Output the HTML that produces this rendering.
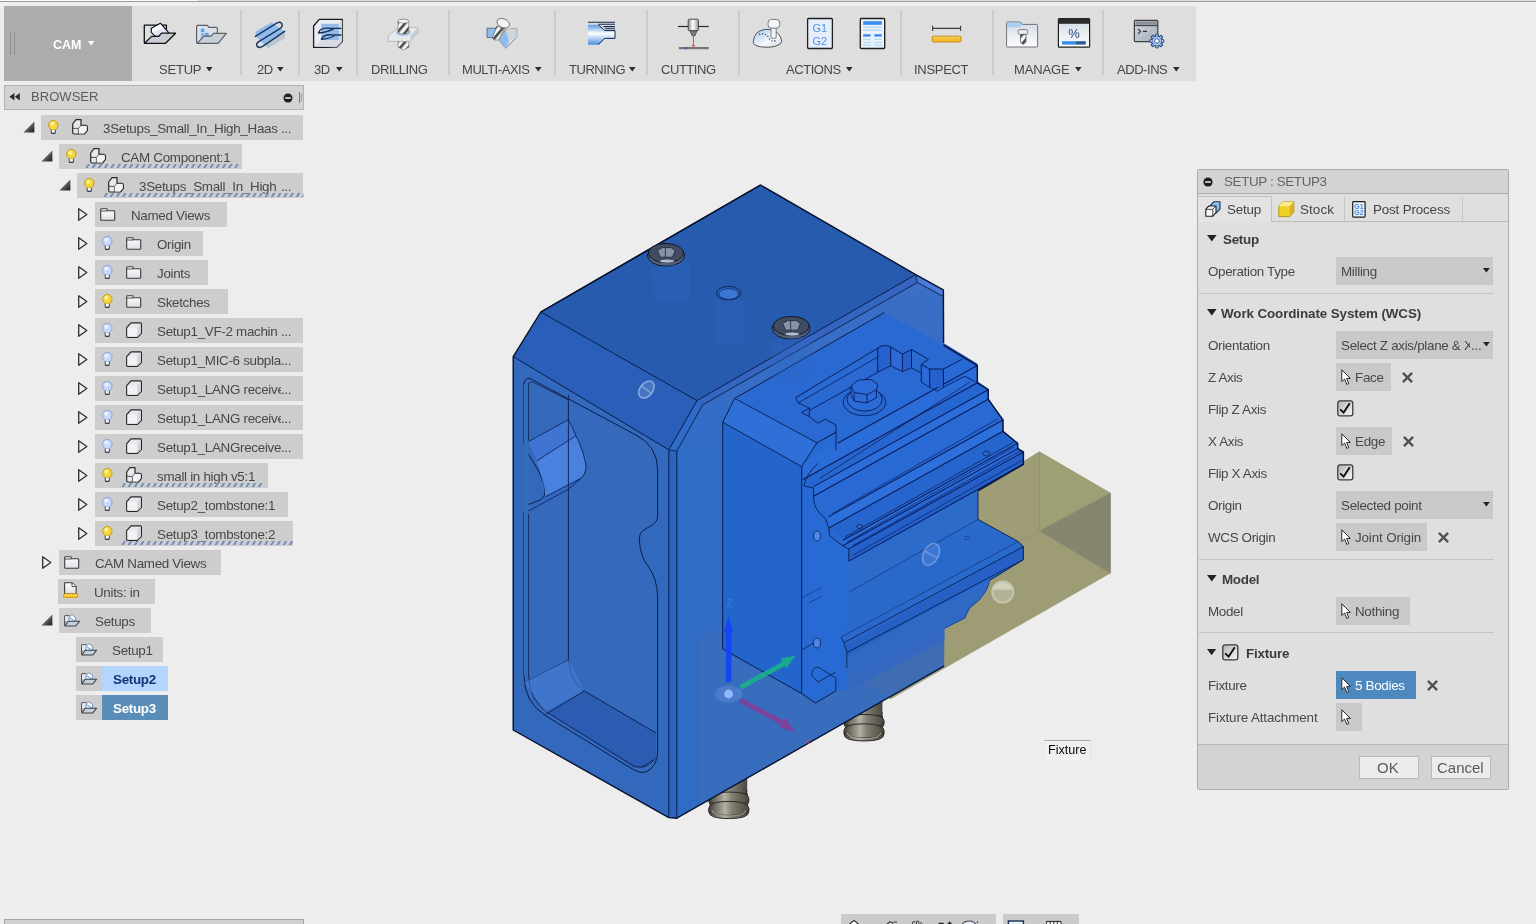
<!DOCTYPE html>
<html lang="en"><head><meta charset="utf-8"><title>Fusion 360 CAM - Setup</title>
<style>
html,body{margin:0;padding:0;}
body{width:1536px;height:924px;overflow:hidden;background:#ededed;position:relative;
 font-family:"Liberation Sans",sans-serif;font-size:13px;color:#484848;}
.a{position:absolute;}
.t{position:absolute;white-space:nowrap;line-height:16px;height:16px;will-change:transform;}
svg{position:absolute;overflow:visible;}
</style></head>
<body>
<div class="a" style="left:0px;top:0px;width:198px;height:1px;background:#fbfbfb;"></div>
<div class="a" style="left:198px;top:0px;width:1338px;height:1px;background:#e0e0e0;"></div>
<div class="a" style="left:0px;top:1px;width:1536px;height:1px;background:#9c9c9c;"></div>
<div class="a" style="left:0px;top:2px;width:1536px;height:4px;background:#efefef;"></div>
<div class="a" style="left:4px;top:6px;width:1192px;height:75px;background:#dedede;"></div>
<div class="a" style="left:4px;top:6px;width:128px;height:75px;background:#adadad;"></div>
<div class="a" style="left:10px;top:32px;width:1px;height:23px;background:#8e8e8e;"></div>
<div class="a" style="left:14px;top:32px;width:1px;height:23px;background:#8e8e8e;"></div>
<div class="t" style="left:52.5px;top:37.47px;font-size:12.5px;color:#fff;font-weight:bold;">CAM</div>
<svg style="left:87.5px;top:41.2px" width="6.4" height="4.6" viewBox="0 0 6.4 4.6"><path d="M0 0H6.4L3.2 4.6Z" fill="#fff"/></svg>
<div class="a" style="left:240px;top:10px;width:2px;height:65px;background:#cbcbcb;"></div>
<div class="a" style="left:298px;top:10px;width:2px;height:65px;background:#cbcbcb;"></div>
<div class="a" style="left:356px;top:10px;width:2px;height:65px;background:#cbcbcb;"></div>
<div class="a" style="left:448px;top:10px;width:2px;height:65px;background:#cbcbcb;"></div>
<div class="a" style="left:554px;top:10px;width:2px;height:65px;background:#cbcbcb;"></div>
<div class="a" style="left:646px;top:10px;width:2px;height:65px;background:#cbcbcb;"></div>
<div class="a" style="left:738px;top:10px;width:2px;height:65px;background:#cbcbcb;"></div>
<div class="a" style="left:900px;top:10px;width:2px;height:65px;background:#cbcbcb;"></div>
<div class="a" style="left:992px;top:10px;width:2px;height:65px;background:#cbcbcb;"></div>
<div class="a" style="left:1102px;top:10px;width:2px;height:65px;background:#cbcbcb;"></div>
<div class="t" style="left:159.2px;top:62.40px;font-size:13px;color:#464646;letter-spacing:-0.2px;">SETUP</div>
<svg style="left:205.5px;top:67.3px" width="6.6" height="4.6" viewBox="0 0 6.6 4.6"><path d="M0 0H6.6L3.3 4.6Z" fill="#2c2c2c"/></svg>
<div class="t" style="left:257.0px;top:62.40px;font-size:13px;color:#464646;letter-spacing:-0.45px;">2D</div>
<svg style="left:277.4px;top:67.3px" width="6.6" height="4.6" viewBox="0 0 6.6 4.6"><path d="M0 0H6.6L3.3 4.6Z" fill="#2c2c2c"/></svg>
<div class="t" style="left:314.4px;top:62.40px;font-size:13px;color:#464646;letter-spacing:-0.45px;">3D</div>
<svg style="left:335.5px;top:67.3px" width="6.6" height="4.6" viewBox="0 0 6.6 4.6"><path d="M0 0H6.6L3.3 4.6Z" fill="#2c2c2c"/></svg>
<div class="t" style="left:370.6px;top:62.40px;font-size:13px;color:#464646;letter-spacing:-0.45px;">DRILLING</div>
<div class="t" style="left:462.4px;top:62.40px;font-size:13px;color:#464646;letter-spacing:-0.45px;">MULTI-AXIS</div>
<svg style="left:535px;top:67.3px" width="6.6" height="4.6" viewBox="0 0 6.6 4.6"><path d="M0 0H6.6L3.3 4.6Z" fill="#2c2c2c"/></svg>
<div class="t" style="left:568.6px;top:62.40px;font-size:13px;color:#464646;letter-spacing:-0.45px;">TURNING</div>
<svg style="left:629.2px;top:67.3px" width="6.6" height="4.6" viewBox="0 0 6.6 4.6"><path d="M0 0H6.6L3.3 4.6Z" fill="#2c2c2c"/></svg>
<div class="t" style="left:660.6px;top:62.40px;font-size:13px;color:#464646;letter-spacing:-0.45px;">CUTTING</div>
<div class="t" style="left:786.0px;top:62.40px;font-size:13px;color:#464646;letter-spacing:-0.45px;">ACTIONS</div>
<svg style="left:846.3px;top:67.3px" width="6.6" height="4.6" viewBox="0 0 6.6 4.6"><path d="M0 0H6.6L3.3 4.6Z" fill="#2c2c2c"/></svg>
<div class="t" style="left:914.2px;top:62.40px;font-size:13px;color:#464646;letter-spacing:-0.3px;">INSPECT</div>
<div class="t" style="left:1013.6px;top:62.40px;font-size:13px;color:#464646;letter-spacing:-0.12px;">MANAGE</div>
<svg style="left:1074.5px;top:67.3px" width="6.6" height="4.6" viewBox="0 0 6.6 4.6"><path d="M0 0H6.6L3.3 4.6Z" fill="#2c2c2c"/></svg>
<div class="t" style="left:1117.4px;top:62.40px;font-size:13px;color:#464646;letter-spacing:-0.45px;">ADD-INS</div>
<svg style="left:1173.3px;top:67.3px" width="6.6" height="4.6" viewBox="0 0 6.6 4.6"><path d="M0 0H6.6L3.3 4.6Z" fill="#2c2c2c"/></svg>

<svg style="left:0;top:0" width="1536" height="90" viewBox="0 0 1536 90">
<defs>
 <linearGradient id="gSil" x1="0" x2="1" y1="0" y2="0"><stop offset="0" stop-color="#8e9399"/><stop offset=".45" stop-color="#fdfdfd"/><stop offset="1" stop-color="#9aa0a6"/></linearGradient>
 <linearGradient id="gTurn" x1="0" x2="0" y1="0" y2="1"><stop offset="0" stop-color="#5a9be2"/><stop offset=".45" stop-color="#ffffff"/><stop offset="1" stop-color="#4a90de"/></linearGradient>
 <linearGradient id="gPap" x1="0" x2="0" y1="0" y2="1"><stop offset="0" stop-color="#d3dae4"/><stop offset="1" stop-color="#fdfdfe"/></linearGradient>
 <linearGradient id="gDome" x1="0" x2="1" y1="0" y2="1"><stop offset="0" stop-color="#a9c6ea"/><stop offset=".6" stop-color="#f6f9fd"/><stop offset="1" stop-color="#cfd6de"/></linearGradient>
 <linearGradient id="gWin" x1="0" x2="1" y1="0" y2="1"><stop offset="0" stop-color="#d4d9e2"/><stop offset="1" stop-color="#a4acbb"/></linearGradient>
 <pattern id="pStripe" width="6" height="6" patternUnits="userSpaceOnUse" patternTransform="rotate(-50)"><rect width="6" height="6" fill="#f4f4f4"/><rect width="6" height="2.6" fill="#4a4a4a"/></pattern>
</defs>
<!-- 1 setup folder -->
<g stroke-linejoin="round">
 <path d="M144.3 43.3V25.2H166.4V33.2H161.5L158.8 36.4H151.6Z" fill="#dde1e6"/>
 <path d="M144.3 43.3V25.2H166.4V33" fill="none" stroke="#111" stroke-width="1.3"/>
 <path d="M151.3 28.2L160.4 23.2L168.8 32.8L163.6 35.8L155.4 36.4L151.3 32.3Z" fill="#fcfdff" stroke="#111" stroke-width="1.2"/>
 <path d="M152.4 32L155.6 35.4L163 35L167.4 32.6L163.6 28.4Z" fill="#d6e3f3" opacity=".85"/>
 <path d="M144.6 43.3L151.6 36.4H158.8L161.5 33.2H175.6L165.6 43.3Z" fill="#c8ced6" stroke="#111" stroke-width="1.3"/>
</g>
<!-- 2 folder with grid -->
<g stroke-linejoin="round">
 <path d="M196.6 43.2V26.6Q196.6 25.4 197.8 25.4H207.4L209 27.4H216.4Q217.4 27.4 217.4 28.4V33.4H213.4L211.2 36.2H203.8Z" fill="#dde2ea"/>
 <path d="M196.6 43.2V26.6Q196.6 25.4 197.8 25.4H207.4L209 27.4H216.4Q217.4 27.4 217.4 28.4V33.4" fill="none" stroke="#5a5f66" stroke-width="1.2"/>
 <rect x="200.8" y="28.6" width="3.6" height="3.4" fill="#5aa9ee"/><rect x="200.8" y="32.8" width="3.6" height="3.2" fill="#7ebdf3"/><rect x="205" y="32.8" width="3.6" height="3.2" fill="#5aa9ee"/><rect x="200.8" y="36.4" width="1.8" height="2.8" fill="#7ebdf3"/>
 <path d="M197.2 43.3L203.8 36.2H211.2L213.4 33.3H226.4L218 43.3Z" fill="#c9cfd7" stroke="#5a5f66" stroke-width="1.2"/>
</g>
<!-- 3 2D -->
<g>
 <path d="M255.6 31.6L271.6 22.2L285 31.4V38L268.2 48L255.6 36.4Z" fill="#92bbea"/>
 <path d="M268.2 48L285 38V31.4L266.4 42.4Z" fill="#bcc4cc"/>
 <path d="M255.4 36.4L276.6 23.2Q280.6 21 282 24Q283 26.8 279.6 28.8L258.8 41.6Q255.4 44 257.2 46.4Q259.4 48.4 262.6 46.4L284.6 31.4" fill="none" stroke="#1b3766" stroke-width="1.5" stroke-linecap="round"/>
</g>
<!-- 4 3D -->
<g>
 <path d="M313.6 26L319.2 19.4H342.4V41.4L336.6 47.4H313.6Z" fill="#e9edf2" stroke="#1c1c1c" stroke-width="1.3" stroke-linejoin="round"/>
 <path d="M336.6 47.4L342.4 41.4V19.4L338.9 23.8V40L321.3 40L315 46.6Z" fill="#cfd6de" opacity=".7"/>
 <rect x="321.3" y="23.8" width="17.6" height="16.2" fill="#93bce9"/>
 <path d="M318.4 33Q320 27.8 329 28.2L341 28.4M318.4 33Q327 32.6 334.4 28.4" fill="none" stroke="#18305c" stroke-width="1.4" stroke-linecap="round"/>
 <path d="M321.4 39.2Q323.6 34.4 331.4 34.8L341 35M321.4 39.2Q329 39 336 35" fill="none" stroke="#18305c" stroke-width="1.4" stroke-linecap="round"/>
</g>
<!-- 5 drilling -->
<g>
 <path d="M398 41V47.2L403.4 49.8L408.8 47.2V41Z" fill="url(#pStripe)" stroke="#666" stroke-width=".6"/>
 <path d="M388.3 36L398 27.6H418V33L410.3 41.3H388.3Z" fill="#e6eaee" stroke="#a9b0b8" stroke-width=".8" stroke-linejoin="round"/>
 <path d="M410.3 41.3L418 33V27.6L410.3 36Z" fill="#c6ccd3"/>
 <ellipse cx="403.4" cy="32.6" rx="7.6" ry="3.4" fill="#a9c6e6"/>
 <path d="M398 21.4Q398 19.2 403.4 19.2T408.8 21.4V32Q408.8 34 403.4 34T398 32Z" fill="url(#pStripe)" stroke="#666" stroke-width=".6"/>
 <ellipse cx="403.4" cy="21.2" rx="5.2" ry="1.9" fill="#f2f2f2" stroke="#777" stroke-width=".5"/>
</g>
<!-- 6 multi-axis -->
<g>
 <path d="M487 28.2H496V37.6H487Z" fill="#8fbcea" stroke="#33506e" stroke-width=".7"/>
 <path d="M498.7 39.8L506 29.6L516.7 28.6V37.4L505.5 48.2Z" fill="#e4e9ee" stroke="#4a5560" stroke-width=".7" stroke-linejoin="round"/>
 <path d="M506 29.6L516.7 28.6V37.4L509.2 41.6Z" fill="#cfd5dc"/>
 <path d="M498.7 39.8L506 30.6L509.2 41.6L505.5 48.2Z" fill="#8fbcea"/>
 <path d="M496.6 26.2L492.4 38Q494 41 498.6 39.8L504.8 28.6Z" fill="url(#pStripe)" stroke="#555" stroke-width=".6"/>
 <ellipse cx="503.2" cy="23.2" rx="6.6" ry="4.3" transform="rotate(24 503.2 23.2)" fill="#f4f4f4" stroke="#666" stroke-width=".8"/>
</g>
<!-- 7 turning -->
<g>
 <path d="M588 24.7H598.3L604.7 30.6H615V38.4H604.7L598.3 44.7H588Z" fill="url(#gTurn)"/>
 <path d="M588 22.2H615M598.6 24.3H615M603.4 26.6H615M605 28.7H615" stroke="#13294f" stroke-width="1.1" fill="none"/>
 <path d="M598.3 24.7L604.7 30.6H615V38.4H604.7L598.3 44.7" stroke="#13294f" stroke-width="1" fill="none"/>
</g>
<!-- 8 cutting -->
<g>
 <path d="M678 26.5H708.8" stroke="#2a2a2a" stroke-width="1.2"/>
 <rect x="688.2" y="19.2" width="10.2" height="11.6" rx="1.4" fill="url(#gSil)" stroke="#3c3c3c" stroke-width=".9"/>
 <path d="M690 30.8H697L695 35.6H692Z" fill="#7a8088" stroke="#3c3c3c" stroke-width=".8"/>
 <path d="M693.4 35.6V46.6M691.8 45L693.4 46.8L695 45" stroke="#e2492b" stroke-width="1" fill="none"/>
 <rect x="678.8" y="47" width="30" height="2.2" fill="#757575"/>
 <rect x="684.6" y="47" width="2.4" height="2.2" fill="#2f5f9e"/>
</g>
<!-- 9 simulate -->
<g>
 <path d="M753.4 41.4Q754 31 765 29.4Q777 28.6 781 38Q782.4 42 780.6 43.6Q776 47.4 766 47.2Q756 47 753.4 43.4Z" fill="url(#gDome)" stroke="#50555c" stroke-width="1"/>
 <path d="M759 34.4Q766 32.4 769 38Q770.6 42 776.6 40.6" fill="none" stroke="#1f3c78" stroke-width="1.2" stroke-dasharray="1.2 1.8"/>
 <path d="M771 27.6V37.8Q773.6 39.4 776.2 37.8V27.6Z" fill="#f3f4f6" stroke="#6a6f76" stroke-width=".9"/>
 <rect x="768" y="19.4" width="11.8" height="8.8" rx="3.6" fill="#f5f6f8" stroke="#6a6f76" stroke-width=".9"/>
</g>
<!-- 10 G1G2 -->
<g>
 <rect x="807.6" y="18.5" width="24.8" height="30" rx="1" fill="#e6eefa" stroke="#1e1e1e" stroke-width="1.3"/>
 <text x="819.8" y="31.6" text-anchor="middle" font-family="Liberation Sans, sans-serif" font-size="11" fill="#4a92ea">G1</text>
 <text x="819.8" y="44.6" text-anchor="middle" font-family="Liberation Sans, sans-serif" font-size="11" fill="#4a92ea">G2</text>
</g>
<!-- 11 sheet -->
<g>
 <rect x="860.3" y="18.5" width="24.4" height="30" rx="1" fill="#e9f1fb" stroke="#1e1e1e" stroke-width="1.3"/>
 <rect x="863.2" y="21.2" width="18.6" height="3.6" fill="#3a8ceb"/>
 <path d="M863.2 27.2H881.8M863.2 30.2H881.8" stroke="#a7cdf3" stroke-width="1"/>
 <rect x="863.2" y="34.2" width="7.4" height="2.4" fill="#3a8ceb"/><rect x="874.4" y="34.2" width="7.4" height="2.4" fill="#3a8ceb"/>
 <path d="M863.2 39.4H870.6M874.4 39.4H881.8M863.2 42.4H870.6M874.4 42.4H881.8M863.2 45.2H870.6M874.4 45.2H881.8" stroke="#a7d6f0" stroke-width="1"/>
</g>
<!-- 12 inspect -->
<g>
 <path d="M932.4 28.4H960.8M932.6 25.8V31M960.6 25.8V31" stroke="#3c3c3c" stroke-width="1.1" fill="none"/>
 <rect x="932.2" y="36.2" width="28.8" height="5.8" rx="1.2" fill="#f2bb2c" stroke="#b9860e" stroke-width=".9"/>
 <path d="M935 36.6V38.6M938 36.6V38.6M941 36.6V38.6M944 36.6V38.6M947 36.6V38.6M950 36.6V38.6M953 36.6V38.6M956 36.6V38.6M959 36.6V38.6" stroke="#fbe6a4" stroke-width="1"/>
</g>
<!-- 13 tool library -->
<g>
 <path d="M1006.6 23Q1006.6 22 1007.6 22H1020L1022.4 24.4H1036.6Q1037.6 24.4 1037.6 25.4V46Q1037.6 47 1036.6 47H1007.6Q1006.6 47 1006.6 46Z" fill="url(#gPap)" stroke="#6d737b" stroke-width="1"/>
 <path d="M1007.2 22.6H1019.8L1022 24.8L1019.8 27.2H1007.2Z" fill="#a9cff2"/>
 <rect x="1018.2" y="29.6" width="9.4" height="4.8" rx="1.6" fill="#eceef0" stroke="#666" stroke-width=".8"/>
 <path d="M1020.5 34.4H1026V42.4L1023.2 44.4L1020.5 42.4Z" fill="url(#pStripe)" stroke="#555" stroke-width=".7"/>
</g>
<!-- 14 percent -->
<g>
 <rect x="1058.4" y="18.6" width="31.2" height="28.6" rx="1" fill="url(#gPap)" stroke="#1e1e1e" stroke-width="1.2"/>
 <rect x="1058.4" y="18.6" width="31.2" height="5.2" fill="#2b2b2b"/>
 <text x="1074" y="38" text-anchor="middle" font-family="Liberation Sans, sans-serif" font-size="13" fill="#274a84">%</text>
 <rect x="1062" y="41.2" width="14" height="3.4" fill="#3a8ceb"/><rect x="1076" y="41.2" width="9.8" height="3.4" fill="#2a5b9b"/>
</g>
<!-- 15 add-ins -->
<g>
 <rect x="1134.4" y="20.3" width="23.4" height="21.3" rx="1" fill="url(#gWin)" stroke="#3e3e3e" stroke-width="1.2"/>
 <rect x="1135.4" y="21.4" width="21.4" height="3.4" fill="#8b9099"/>
 <path d="M1134.4 25.6H1157.8" stroke="#3e3e3e" stroke-width="1.1"/>
 <path d="M1138 29L1140.6 31.4L1138 33.8M1143 31.4H1147" stroke="#333" stroke-width="1.1" fill="none"/>
 <g transform="translate(1156.9 41)">
  <g fill="#a9c9f1" stroke="#1f3b79" stroke-width="1">
   <circle r="5"/>
   <rect x="-1.4" y="-6.9" width="2.8" height="2.6" rx=".6"/><rect x="-1.4" y="4.3" width="2.8" height="2.6" rx=".6"/>
   <rect x="-6.9" y="-1.4" width="2.6" height="2.8" rx=".6"/><rect x="4.3" y="-1.4" width="2.6" height="2.8" rx=".6"/>
   <g transform="rotate(45)"><rect x="-1.4" y="-6.9" width="2.8" height="2.6" rx=".6"/><rect x="-1.4" y="4.3" width="2.8" height="2.6" rx=".6"/><rect x="-6.9" y="-1.4" width="2.6" height="2.8" rx=".6"/><rect x="4.3" y="-1.4" width="2.6" height="2.8" rx=".6"/></g>
  </g>
  <circle r="4.5" fill="#a9c9f1"/><circle r="2.3" fill="#fff" stroke="#1f3b79" stroke-width=".8"/>
 </g>
</g>
</svg>

<svg style="left:0;top:0" width="0" height="0"><defs>
<linearGradient id="gTriD" x1="0" y1="0" x2="1" y2="1"><stop offset=".25" stop-color="#8c8c8c"/><stop offset=".75" stop-color="#3c3c3c"/><stop offset="1" stop-color="#1e1e1e"/></linearGradient>
<linearGradient id="gFold" x1="0" y1="0" x2="0" y2="1"><stop offset="0" stop-color="#ffffff"/><stop offset="1" stop-color="#dcdfe5"/></linearGradient>
<pattern id="pDash" width="6.2" height="4" patternUnits="userSpaceOnUse"><path d="M.4 4L2.6 4L5 0L2.8 0Z" fill="#7688a6"/></pattern>
</defs></svg>
<div class="a" style="left:4px;top:85px;width:300px;height:25px;background:#d3d3d3;box-sizing:border-box;border:1px solid #b2b2b2;"></div>
<svg style="left:9px;top:92px" width="12" height="10" viewBox="0 0 12 10"><path d="M5.4 1V8.6L.4 4.8Z M10.8 1V8.6L5.8 4.8Z" fill="#2a2a2a"/></svg>
<div class="t" style="left:31px;top:89.00px;font-size:13px;color:#5c5c5c;letter-spacing:0.05px;">BROWSER</div>
<svg style="left:282.6px;top:92.6px" width="10" height="10" viewBox="0 0 10 10"><circle cx="5" cy="5" r="4.5" fill="#1e1e1e"/><rect x="2.2" y="4.2" width="5.6" height="1.6" fill="#e8e8e8"/></svg>
<div class="a" style="left:299px;top:92px;width:1px;height:11px;background:#747474;"></div>
<div class="a" style="left:301px;top:94px;width:1px;height:7px;background:#9c9c9c;"></div>
<div class="a" style="left:41px;top:115px;width:262px;height:24.5px;background:#cdcdcd;"></div>
<svg style="left:22.6px;top:121.2px" width="12" height="12" viewBox="0 0 12 12"><path d="M11.4 .4V11.4H.4Z" fill="url(#gTriD)"/></svg>
<svg style="left:47.7px;top:119.6px" width="11" height="14" viewBox="0 0 11 14"><path d="M.5 5.2A4.8 4.8 0 1 1 10.1 5.2Q9.8 8 7.6 9.8H3Q.8 8 .5 5.2Z" fill="#f3d53c" stroke="#c39d22" stroke-width="1"/><circle cx="4.4" cy="3.8" r="2.1" fill="#fbf2a8" opacity=".85"/><path d="M3.2 9.8V13H7.4V9.8Z" fill="#f4f6fa"/><path d="M3.2 9.8V12.4Q3.2 13.2 4 13.2H6.6Q7.4 13.2 7.4 12.4V9.8" fill="none" stroke="#4e5565" stroke-width="1.1"/><path d="M3.4 13.3H7.2" stroke="#2e3340" stroke-width="1"/></svg>
<svg style="left:72px;top:118.6px" width="16" height="16" viewBox="0 0 16 16"><path d="M.7 5L4 .7H9V6.4H13.6Q15.4 6.4 15.4 8V11.4L12.4 15H2Q.7 15 .7 13.6Z" fill="#e8eaee" stroke="#262626" stroke-width="1.2" stroke-linejoin="round"/><path d="M6.4 15V9.4L9 6.4M6.4 9.4H.9" stroke="#444" stroke-width=".9" fill="none"/><path d="M6.8 14.6V9.6L9.2 6.8H14.8V11.2L12.2 14.6Z" fill="#f6f7f9" opacity=".7"/></svg>
<div class="t" style="left:103.19999999999999px;top:120.96px;font-size:13.4px;color:#484848;letter-spacing:-0.3px;width:177.6px;overflow:hidden;">3Setups_Small_In_High_Haas </div>
<div class="t" style="left:281px;top:120.96px;font-size:13.4px;color:#484848;letter-spacing:-0.35px;">...</div>
<div class="a" style="left:59px;top:144px;width:183px;height:24.5px;background:#cdcdcd;"></div>
<svg style="left:40.6px;top:150.2px" width="12" height="12" viewBox="0 0 12 12"><path d="M11.4 .4V11.4H.4Z" fill="url(#gTriD)"/></svg>
<svg style="left:65.7px;top:148.6px" width="11" height="14" viewBox="0 0 11 14"><path d="M.5 5.2A4.8 4.8 0 1 1 10.1 5.2Q9.8 8 7.6 9.8H3Q.8 8 .5 5.2Z" fill="#f3d53c" stroke="#c39d22" stroke-width="1"/><circle cx="4.4" cy="3.8" r="2.1" fill="#fbf2a8" opacity=".85"/><path d="M3.2 9.8V13H7.4V9.8Z" fill="#f4f6fa"/><path d="M3.2 9.8V12.4Q3.2 13.2 4 13.2H6.6Q7.4 13.2 7.4 12.4V9.8" fill="none" stroke="#4e5565" stroke-width="1.1"/><path d="M3.4 13.3H7.2" stroke="#2e3340" stroke-width="1"/></svg>
<svg style="left:90px;top:147.6px" width="16" height="16" viewBox="0 0 16 16"><path d="M.7 5L4 .7H9V6.4H13.6Q15.4 6.4 15.4 8V11.4L12.4 15H2Q.7 15 .7 13.6Z" fill="#e8eaee" stroke="#262626" stroke-width="1.2" stroke-linejoin="round"/><path d="M6.4 15V9.4L9 6.4M6.4 9.4H.9" stroke="#444" stroke-width=".9" fill="none"/><path d="M6.8 14.6V9.6L9.2 6.8H14.8V11.2L12.2 14.6Z" fill="#f6f7f9" opacity=".7"/></svg>
<div class="t" style="left:121.19999999999999px;top:149.96px;font-size:13.4px;color:#484848;letter-spacing:-0.3px;">CAM Component:1</div>
<svg style="left:84.5px;top:163.8px" width="154.5" height="4" viewBox="0 0 154.5 4"><rect y=".6" width="154.5" height="3.4" fill="#c6d0df" opacity=".75"/><rect width="154.5" height="4" fill="url(#pDash)"/></svg>
<div class="a" style="left:77px;top:173px;width:226px;height:24.5px;background:#cdcdcd;"></div>
<svg style="left:58.6px;top:179.2px" width="12" height="12" viewBox="0 0 12 12"><path d="M11.4 .4V11.4H.4Z" fill="url(#gTriD)"/></svg>
<svg style="left:83.7px;top:177.6px" width="11" height="14" viewBox="0 0 11 14"><path d="M.5 5.2A4.8 4.8 0 1 1 10.1 5.2Q9.8 8 7.6 9.8H3Q.8 8 .5 5.2Z" fill="#f3d53c" stroke="#c39d22" stroke-width="1"/><circle cx="4.4" cy="3.8" r="2.1" fill="#fbf2a8" opacity=".85"/><path d="M3.2 9.8V13H7.4V9.8Z" fill="#f4f6fa"/><path d="M3.2 9.8V12.4Q3.2 13.2 4 13.2H6.6Q7.4 13.2 7.4 12.4V9.8" fill="none" stroke="#4e5565" stroke-width="1.1"/><path d="M3.4 13.3H7.2" stroke="#2e3340" stroke-width="1"/></svg>
<svg style="left:108px;top:176.6px" width="16" height="16" viewBox="0 0 16 16"><path d="M.7 5L4 .7H9V6.4H13.6Q15.4 6.4 15.4 8V11.4L12.4 15H2Q.7 15 .7 13.6Z" fill="#e8eaee" stroke="#262626" stroke-width="1.2" stroke-linejoin="round"/><path d="M6.4 15V9.4L9 6.4M6.4 9.4H.9" stroke="#444" stroke-width=".9" fill="none"/><path d="M6.8 14.6V9.6L9.2 6.8H14.8V11.2L12.2 14.6Z" fill="#f6f7f9" opacity=".7"/></svg>
<div class="t" style="left:139.2px;top:178.96px;font-size:13.4px;color:#484848;letter-spacing:-0.3px;width:141.6px;overflow:hidden;">3Setups_Small_In_High </div>
<div class="t" style="left:281px;top:178.96px;font-size:13.4px;color:#484848;letter-spacing:-0.35px;">...</div>
<svg style="left:102.5px;top:192.8px" width="200.5" height="4" viewBox="0 0 200.5 4"><rect y=".6" width="200.5" height="3.4" fill="#c6d0df" opacity=".75"/><rect width="200.5" height="4" fill="url(#pDash)"/></svg>
<div class="a" style="left:95px;top:202px;width:132px;height:24.5px;background:#cdcdcd;"></div>
<svg style="left:77.6px;top:207.7px" width="10" height="13" viewBox="0 0 10 13"><path d="M.7 .7L8.8 6.5L.7 12.3Z" fill="#f0f0f0" stroke="#2e2e2e" stroke-width="1.3" stroke-linejoin="round"/></svg>
<svg style="left:100px;top:208px" width="16" height="13" viewBox="0 0 16 13"><path d="M.7 11.4V1.6Q.7 .7 1.6 .7H6.4Q7.2 .7 7.2 1.6V2.8H13.8Q14.7 2.8 14.7 3.7V11.4Q14.7 12.3 13.8 12.3H1.6Q.7 12.3 .7 11.4Z" fill="url(#gFold)" stroke="#3c3c3c" stroke-width="1.1"/><path d="M.9 3H7" stroke="#3c3c3c" stroke-width=".9"/></svg>
<div class="t" style="left:131.0px;top:207.96px;font-size:13.4px;color:#484848;letter-spacing:-0.3px;">Named Views</div>
<div class="a" style="left:95px;top:231px;width:108px;height:24.5px;background:#cdcdcd;"></div>
<svg style="left:77.6px;top:236.7px" width="10" height="13" viewBox="0 0 10 13"><path d="M.7 .7L8.8 6.5L.7 12.3Z" fill="#f0f0f0" stroke="#2e2e2e" stroke-width="1.3" stroke-linejoin="round"/></svg>
<svg style="left:101.7px;top:235.6px" width="11" height="14" viewBox="0 0 11 14"><path d="M.5 5.2A4.8 4.8 0 1 1 10.1 5.2Q9.8 8 7.6 9.8H3Q.8 8 .5 5.2Z" fill="#c7d8fa" stroke="#8ba3d6" stroke-width="1"/><circle cx="4.4" cy="3.8" r="2.1" fill="#eef4fe" opacity=".85"/><path d="M3.2 9.8V13H7.4V9.8Z" fill="#f4f6fa"/><path d="M3.2 9.8V12.4Q3.2 13.2 4 13.2H6.6Q7.4 13.2 7.4 12.4V9.8" fill="none" stroke="#4e5565" stroke-width="1.1"/><path d="M3.4 13.3H7.2" stroke="#2e3340" stroke-width="1"/></svg>
<svg style="left:126px;top:237px" width="16" height="13" viewBox="0 0 16 13"><path d="M.7 11.4V1.6Q.7 .7 1.6 .7H6.4Q7.2 .7 7.2 1.6V2.8H13.8Q14.7 2.8 14.7 3.7V11.4Q14.7 12.3 13.8 12.3H1.6Q.7 12.3 .7 11.4Z" fill="url(#gFold)" stroke="#3c3c3c" stroke-width="1.1"/><path d="M.9 3H7" stroke="#3c3c3c" stroke-width=".9"/></svg>
<div class="t" style="left:157.2px;top:236.96px;font-size:13.4px;color:#484848;letter-spacing:-0.3px;">Origin</div>
<div class="a" style="left:95px;top:260px;width:113px;height:24.5px;background:#cdcdcd;"></div>
<svg style="left:77.6px;top:265.7px" width="10" height="13" viewBox="0 0 10 13"><path d="M.7 .7L8.8 6.5L.7 12.3Z" fill="#f0f0f0" stroke="#2e2e2e" stroke-width="1.3" stroke-linejoin="round"/></svg>
<svg style="left:101.7px;top:264.6px" width="11" height="14" viewBox="0 0 11 14"><path d="M.5 5.2A4.8 4.8 0 1 1 10.1 5.2Q9.8 8 7.6 9.8H3Q.8 8 .5 5.2Z" fill="#c7d8fa" stroke="#8ba3d6" stroke-width="1"/><circle cx="4.4" cy="3.8" r="2.1" fill="#eef4fe" opacity=".85"/><path d="M3.2 9.8V13H7.4V9.8Z" fill="#f4f6fa"/><path d="M3.2 9.8V12.4Q3.2 13.2 4 13.2H6.6Q7.4 13.2 7.4 12.4V9.8" fill="none" stroke="#4e5565" stroke-width="1.1"/><path d="M3.4 13.3H7.2" stroke="#2e3340" stroke-width="1"/></svg>
<svg style="left:126px;top:266px" width="16" height="13" viewBox="0 0 16 13"><path d="M.7 11.4V1.6Q.7 .7 1.6 .7H6.4Q7.2 .7 7.2 1.6V2.8H13.8Q14.7 2.8 14.7 3.7V11.4Q14.7 12.3 13.8 12.3H1.6Q.7 12.3 .7 11.4Z" fill="url(#gFold)" stroke="#3c3c3c" stroke-width="1.1"/><path d="M.9 3H7" stroke="#3c3c3c" stroke-width=".9"/></svg>
<div class="t" style="left:157.2px;top:265.96px;font-size:13.4px;color:#484848;letter-spacing:-0.3px;">Joints</div>
<div class="a" style="left:95px;top:289px;width:133px;height:24.5px;background:#cdcdcd;"></div>
<svg style="left:77.6px;top:294.7px" width="10" height="13" viewBox="0 0 10 13"><path d="M.7 .7L8.8 6.5L.7 12.3Z" fill="#f0f0f0" stroke="#2e2e2e" stroke-width="1.3" stroke-linejoin="round"/></svg>
<svg style="left:101.7px;top:293.6px" width="11" height="14" viewBox="0 0 11 14"><path d="M.5 5.2A4.8 4.8 0 1 1 10.1 5.2Q9.8 8 7.6 9.8H3Q.8 8 .5 5.2Z" fill="#f3d53c" stroke="#c39d22" stroke-width="1"/><circle cx="4.4" cy="3.8" r="2.1" fill="#fbf2a8" opacity=".85"/><path d="M3.2 9.8V13H7.4V9.8Z" fill="#f4f6fa"/><path d="M3.2 9.8V12.4Q3.2 13.2 4 13.2H6.6Q7.4 13.2 7.4 12.4V9.8" fill="none" stroke="#4e5565" stroke-width="1.1"/><path d="M3.4 13.3H7.2" stroke="#2e3340" stroke-width="1"/></svg>
<svg style="left:126px;top:295px" width="16" height="13" viewBox="0 0 16 13"><path d="M.7 11.4V1.6Q.7 .7 1.6 .7H6.4Q7.2 .7 7.2 1.6V2.8H13.8Q14.7 2.8 14.7 3.7V11.4Q14.7 12.3 13.8 12.3H1.6Q.7 12.3 .7 11.4Z" fill="url(#gFold)" stroke="#3c3c3c" stroke-width="1.1"/><path d="M.9 3H7" stroke="#3c3c3c" stroke-width=".9"/></svg>
<div class="t" style="left:157.2px;top:294.96px;font-size:13.4px;color:#484848;letter-spacing:-0.3px;">Sketches</div>
<div class="a" style="left:95px;top:318px;width:208px;height:24.5px;background:#cdcdcd;"></div>
<svg style="left:77.6px;top:323.7px" width="10" height="13" viewBox="0 0 10 13"><path d="M.7 .7L8.8 6.5L.7 12.3Z" fill="#f0f0f0" stroke="#2e2e2e" stroke-width="1.3" stroke-linejoin="round"/></svg>
<svg style="left:101.7px;top:322.6px" width="11" height="14" viewBox="0 0 11 14"><path d="M.5 5.2A4.8 4.8 0 1 1 10.1 5.2Q9.8 8 7.6 9.8H3Q.8 8 .5 5.2Z" fill="#c7d8fa" stroke="#8ba3d6" stroke-width="1"/><circle cx="4.4" cy="3.8" r="2.1" fill="#eef4fe" opacity=".85"/><path d="M3.2 9.8V13H7.4V9.8Z" fill="#f4f6fa"/><path d="M3.2 9.8V12.4Q3.2 13.2 4 13.2H6.6Q7.4 13.2 7.4 12.4V9.8" fill="none" stroke="#4e5565" stroke-width="1.1"/><path d="M3.4 13.3H7.2" stroke="#2e3340" stroke-width="1"/></svg>
<svg style="left:126px;top:321.8px" width="16" height="16" viewBox="0 0 16 16"><path d="M.7 5.6L5 .8H14.4Q15.4 .8 15.4 1.8V11.4L11.4 15.4H1.7Q.7 15.4 .7 14.4Z" fill="#e6e8ec" stroke="#262626" stroke-width="1.2" stroke-linejoin="round"/><path d="M1.4 5.8H11V14.8H1.4Z" fill="#f3f4f6" opacity=".8"/><path d="M11.2 5.6L15 1.4V11.2L11.2 15Z" fill="#cfd3d9" opacity=".8"/></svg>
<div class="t" style="left:157.2px;top:323.96px;font-size:13.4px;color:#484848;letter-spacing:-0.3px;width:123.6px;overflow:hidden;">Setup1_VF-2 machin</div>
<div class="t" style="left:281px;top:323.96px;font-size:13.4px;color:#484848;letter-spacing:-0.35px;">...</div>
<div class="a" style="left:95px;top:347px;width:208px;height:24.5px;background:#cdcdcd;"></div>
<svg style="left:77.6px;top:352.7px" width="10" height="13" viewBox="0 0 10 13"><path d="M.7 .7L8.8 6.5L.7 12.3Z" fill="#f0f0f0" stroke="#2e2e2e" stroke-width="1.3" stroke-linejoin="round"/></svg>
<svg style="left:101.7px;top:351.6px" width="11" height="14" viewBox="0 0 11 14"><path d="M.5 5.2A4.8 4.8 0 1 1 10.1 5.2Q9.8 8 7.6 9.8H3Q.8 8 .5 5.2Z" fill="#c7d8fa" stroke="#8ba3d6" stroke-width="1"/><circle cx="4.4" cy="3.8" r="2.1" fill="#eef4fe" opacity=".85"/><path d="M3.2 9.8V13H7.4V9.8Z" fill="#f4f6fa"/><path d="M3.2 9.8V12.4Q3.2 13.2 4 13.2H6.6Q7.4 13.2 7.4 12.4V9.8" fill="none" stroke="#4e5565" stroke-width="1.1"/><path d="M3.4 13.3H7.2" stroke="#2e3340" stroke-width="1"/></svg>
<svg style="left:126px;top:350.8px" width="16" height="16" viewBox="0 0 16 16"><path d="M.7 5.6L5 .8H14.4Q15.4 .8 15.4 1.8V11.4L11.4 15.4H1.7Q.7 15.4 .7 14.4Z" fill="#e6e8ec" stroke="#262626" stroke-width="1.2" stroke-linejoin="round"/><path d="M1.4 5.8H11V14.8H1.4Z" fill="#f3f4f6" opacity=".8"/><path d="M11.2 5.6L15 1.4V11.2L11.2 15Z" fill="#cfd3d9" opacity=".8"/></svg>
<div class="t" style="left:157.2px;top:352.96px;font-size:13.4px;color:#484848;letter-spacing:-0.3px;width:123.6px;overflow:hidden;">Setup1_MIC-6 subpla</div>
<div class="t" style="left:281px;top:352.96px;font-size:13.4px;color:#484848;letter-spacing:-0.35px;">...</div>
<div class="a" style="left:95px;top:376px;width:208px;height:24.5px;background:#cdcdcd;"></div>
<svg style="left:77.6px;top:381.7px" width="10" height="13" viewBox="0 0 10 13"><path d="M.7 .7L8.8 6.5L.7 12.3Z" fill="#f0f0f0" stroke="#2e2e2e" stroke-width="1.3" stroke-linejoin="round"/></svg>
<svg style="left:101.7px;top:380.6px" width="11" height="14" viewBox="0 0 11 14"><path d="M.5 5.2A4.8 4.8 0 1 1 10.1 5.2Q9.8 8 7.6 9.8H3Q.8 8 .5 5.2Z" fill="#c7d8fa" stroke="#8ba3d6" stroke-width="1"/><circle cx="4.4" cy="3.8" r="2.1" fill="#eef4fe" opacity=".85"/><path d="M3.2 9.8V13H7.4V9.8Z" fill="#f4f6fa"/><path d="M3.2 9.8V12.4Q3.2 13.2 4 13.2H6.6Q7.4 13.2 7.4 12.4V9.8" fill="none" stroke="#4e5565" stroke-width="1.1"/><path d="M3.4 13.3H7.2" stroke="#2e3340" stroke-width="1"/></svg>
<svg style="left:126px;top:379.8px" width="16" height="16" viewBox="0 0 16 16"><path d="M.7 5.6L5 .8H14.4Q15.4 .8 15.4 1.8V11.4L11.4 15.4H1.7Q.7 15.4 .7 14.4Z" fill="#e6e8ec" stroke="#262626" stroke-width="1.2" stroke-linejoin="round"/><path d="M1.4 5.8H11V14.8H1.4Z" fill="#f3f4f6" opacity=".8"/><path d="M11.2 5.6L15 1.4V11.2L11.2 15Z" fill="#cfd3d9" opacity=".8"/></svg>
<div class="t" style="left:157.2px;top:381.96px;font-size:13.4px;color:#484848;letter-spacing:-0.3px;width:123.6px;overflow:hidden;">Setup1_LANG receive</div>
<div class="t" style="left:281px;top:381.96px;font-size:13.4px;color:#484848;letter-spacing:-0.35px;">...</div>
<div class="a" style="left:95px;top:405px;width:208px;height:24.5px;background:#cdcdcd;"></div>
<svg style="left:77.6px;top:410.7px" width="10" height="13" viewBox="0 0 10 13"><path d="M.7 .7L8.8 6.5L.7 12.3Z" fill="#f0f0f0" stroke="#2e2e2e" stroke-width="1.3" stroke-linejoin="round"/></svg>
<svg style="left:101.7px;top:409.6px" width="11" height="14" viewBox="0 0 11 14"><path d="M.5 5.2A4.8 4.8 0 1 1 10.1 5.2Q9.8 8 7.6 9.8H3Q.8 8 .5 5.2Z" fill="#c7d8fa" stroke="#8ba3d6" stroke-width="1"/><circle cx="4.4" cy="3.8" r="2.1" fill="#eef4fe" opacity=".85"/><path d="M3.2 9.8V13H7.4V9.8Z" fill="#f4f6fa"/><path d="M3.2 9.8V12.4Q3.2 13.2 4 13.2H6.6Q7.4 13.2 7.4 12.4V9.8" fill="none" stroke="#4e5565" stroke-width="1.1"/><path d="M3.4 13.3H7.2" stroke="#2e3340" stroke-width="1"/></svg>
<svg style="left:126px;top:408.8px" width="16" height="16" viewBox="0 0 16 16"><path d="M.7 5.6L5 .8H14.4Q15.4 .8 15.4 1.8V11.4L11.4 15.4H1.7Q.7 15.4 .7 14.4Z" fill="#e6e8ec" stroke="#262626" stroke-width="1.2" stroke-linejoin="round"/><path d="M1.4 5.8H11V14.8H1.4Z" fill="#f3f4f6" opacity=".8"/><path d="M11.2 5.6L15 1.4V11.2L11.2 15Z" fill="#cfd3d9" opacity=".8"/></svg>
<div class="t" style="left:157.2px;top:410.96px;font-size:13.4px;color:#484848;letter-spacing:-0.3px;width:123.6px;overflow:hidden;">Setup1_LANG receive</div>
<div class="t" style="left:281px;top:410.96px;font-size:13.4px;color:#484848;letter-spacing:-0.35px;">...</div>
<div class="a" style="left:95px;top:434px;width:208px;height:24.5px;background:#cdcdcd;"></div>
<svg style="left:77.6px;top:439.7px" width="10" height="13" viewBox="0 0 10 13"><path d="M.7 .7L8.8 6.5L.7 12.3Z" fill="#f0f0f0" stroke="#2e2e2e" stroke-width="1.3" stroke-linejoin="round"/></svg>
<svg style="left:101.7px;top:438.6px" width="11" height="14" viewBox="0 0 11 14"><path d="M.5 5.2A4.8 4.8 0 1 1 10.1 5.2Q9.8 8 7.6 9.8H3Q.8 8 .5 5.2Z" fill="#c7d8fa" stroke="#8ba3d6" stroke-width="1"/><circle cx="4.4" cy="3.8" r="2.1" fill="#eef4fe" opacity=".85"/><path d="M3.2 9.8V13H7.4V9.8Z" fill="#f4f6fa"/><path d="M3.2 9.8V12.4Q3.2 13.2 4 13.2H6.6Q7.4 13.2 7.4 12.4V9.8" fill="none" stroke="#4e5565" stroke-width="1.1"/><path d="M3.4 13.3H7.2" stroke="#2e3340" stroke-width="1"/></svg>
<svg style="left:126px;top:437.8px" width="16" height="16" viewBox="0 0 16 16"><path d="M.7 5.6L5 .8H14.4Q15.4 .8 15.4 1.8V11.4L11.4 15.4H1.7Q.7 15.4 .7 14.4Z" fill="#e6e8ec" stroke="#262626" stroke-width="1.2" stroke-linejoin="round"/><path d="M1.4 5.8H11V14.8H1.4Z" fill="#f3f4f6" opacity=".8"/><path d="M11.2 5.6L15 1.4V11.2L11.2 15Z" fill="#cfd3d9" opacity=".8"/></svg>
<div class="t" style="left:157.2px;top:439.96px;font-size:13.4px;color:#484848;letter-spacing:-0.3px;width:123.6px;overflow:hidden;">Setup1_LANGreceive</div>
<div class="t" style="left:281px;top:439.96px;font-size:13.4px;color:#484848;letter-spacing:-0.35px;">...</div>
<div class="a" style="left:95px;top:463px;width:173px;height:24.5px;background:#cdcdcd;"></div>
<svg style="left:77.6px;top:468.7px" width="10" height="13" viewBox="0 0 10 13"><path d="M.7 .7L8.8 6.5L.7 12.3Z" fill="#f0f0f0" stroke="#2e2e2e" stroke-width="1.3" stroke-linejoin="round"/></svg>
<svg style="left:101.7px;top:467.6px" width="11" height="14" viewBox="0 0 11 14"><path d="M.5 5.2A4.8 4.8 0 1 1 10.1 5.2Q9.8 8 7.6 9.8H3Q.8 8 .5 5.2Z" fill="#f3d53c" stroke="#c39d22" stroke-width="1"/><circle cx="4.4" cy="3.8" r="2.1" fill="#fbf2a8" opacity=".85"/><path d="M3.2 9.8V13H7.4V9.8Z" fill="#f4f6fa"/><path d="M3.2 9.8V12.4Q3.2 13.2 4 13.2H6.6Q7.4 13.2 7.4 12.4V9.8" fill="none" stroke="#4e5565" stroke-width="1.1"/><path d="M3.4 13.3H7.2" stroke="#2e3340" stroke-width="1"/></svg>
<svg style="left:126px;top:466.6px" width="16" height="16" viewBox="0 0 16 16"><path d="M.7 5L4 .7H9V6.4H13.6Q15.4 6.4 15.4 8V11.4L12.4 15H2Q.7 15 .7 13.6Z" fill="#e8eaee" stroke="#262626" stroke-width="1.2" stroke-linejoin="round"/><path d="M6.4 15V9.4L9 6.4M6.4 9.4H.9" stroke="#444" stroke-width=".9" fill="none"/><path d="M6.8 14.6V9.6L9.2 6.8H14.8V11.2L12.2 14.6Z" fill="#f6f7f9" opacity=".7"/></svg>
<div class="t" style="left:157.2px;top:468.96px;font-size:13.4px;color:#484848;letter-spacing:-0.3px;">small in high v5:1</div>
<svg style="left:120.5px;top:482.8px" width="141.89999999999998" height="4" viewBox="0 0 141.89999999999998 4"><rect y=".6" width="141.89999999999998" height="3.4" fill="#c6d0df" opacity=".75"/><rect width="141.89999999999998" height="4" fill="url(#pDash)"/></svg>
<div class="a" style="left:95px;top:492px;width:193px;height:24.5px;background:#cdcdcd;"></div>
<svg style="left:77.6px;top:497.7px" width="10" height="13" viewBox="0 0 10 13"><path d="M.7 .7L8.8 6.5L.7 12.3Z" fill="#f0f0f0" stroke="#2e2e2e" stroke-width="1.3" stroke-linejoin="round"/></svg>
<svg style="left:101.7px;top:496.6px" width="11" height="14" viewBox="0 0 11 14"><path d="M.5 5.2A4.8 4.8 0 1 1 10.1 5.2Q9.8 8 7.6 9.8H3Q.8 8 .5 5.2Z" fill="#c7d8fa" stroke="#8ba3d6" stroke-width="1"/><circle cx="4.4" cy="3.8" r="2.1" fill="#eef4fe" opacity=".85"/><path d="M3.2 9.8V13H7.4V9.8Z" fill="#f4f6fa"/><path d="M3.2 9.8V12.4Q3.2 13.2 4 13.2H6.6Q7.4 13.2 7.4 12.4V9.8" fill="none" stroke="#4e5565" stroke-width="1.1"/><path d="M3.4 13.3H7.2" stroke="#2e3340" stroke-width="1"/></svg>
<svg style="left:126px;top:495.8px" width="16" height="16" viewBox="0 0 16 16"><path d="M.7 5.6L5 .8H14.4Q15.4 .8 15.4 1.8V11.4L11.4 15.4H1.7Q.7 15.4 .7 14.4Z" fill="#e6e8ec" stroke="#262626" stroke-width="1.2" stroke-linejoin="round"/><path d="M1.4 5.8H11V14.8H1.4Z" fill="#f3f4f6" opacity=".8"/><path d="M11.2 5.6L15 1.4V11.2L11.2 15Z" fill="#cfd3d9" opacity=".8"/></svg>
<div class="t" style="left:157.2px;top:497.96px;font-size:13.4px;color:#484848;letter-spacing:-0.3px;">Setup2_tombstone:1</div>
<div class="a" style="left:95px;top:521px;width:198px;height:24.5px;background:#cdcdcd;"></div>
<svg style="left:77.6px;top:526.7px" width="10" height="13" viewBox="0 0 10 13"><path d="M.7 .7L8.8 6.5L.7 12.3Z" fill="#f0f0f0" stroke="#2e2e2e" stroke-width="1.3" stroke-linejoin="round"/></svg>
<svg style="left:101.7px;top:525.6px" width="11" height="14" viewBox="0 0 11 14"><path d="M.5 5.2A4.8 4.8 0 1 1 10.1 5.2Q9.8 8 7.6 9.8H3Q.8 8 .5 5.2Z" fill="#f3d53c" stroke="#c39d22" stroke-width="1"/><circle cx="4.4" cy="3.8" r="2.1" fill="#fbf2a8" opacity=".85"/><path d="M3.2 9.8V13H7.4V9.8Z" fill="#f4f6fa"/><path d="M3.2 9.8V12.4Q3.2 13.2 4 13.2H6.6Q7.4 13.2 7.4 12.4V9.8" fill="none" stroke="#4e5565" stroke-width="1.1"/><path d="M3.4 13.3H7.2" stroke="#2e3340" stroke-width="1"/></svg>
<svg style="left:126px;top:524.8px" width="16" height="16" viewBox="0 0 16 16"><path d="M.7 5.6L5 .8H14.4Q15.4 .8 15.4 1.8V11.4L11.4 15.4H1.7Q.7 15.4 .7 14.4Z" fill="#e6e8ec" stroke="#262626" stroke-width="1.2" stroke-linejoin="round"/><path d="M1.4 5.8H11V14.8H1.4Z" fill="#f3f4f6" opacity=".8"/><path d="M11.2 5.6L15 1.4V11.2L11.2 15Z" fill="#cfd3d9" opacity=".8"/></svg>
<div class="t" style="left:157.2px;top:526.96px;font-size:13.4px;color:#484848;letter-spacing:-0.3px;">Setup3_tombstone:2</div>
<svg style="left:120.5px;top:540.8px" width="171.7" height="4" viewBox="0 0 171.7 4"><rect y=".6" width="171.7" height="3.4" fill="#c6d0df" opacity=".75"/><rect width="171.7" height="4" fill="url(#pDash)"/></svg>
<div class="a" style="left:59px;top:550px;width:162px;height:24.5px;background:#cdcdcd;"></div>
<svg style="left:41.6px;top:555.7px" width="10" height="13" viewBox="0 0 10 13"><path d="M.7 .7L8.8 6.5L.7 12.3Z" fill="#f0f0f0" stroke="#2e2e2e" stroke-width="1.3" stroke-linejoin="round"/></svg>
<svg style="left:64px;top:556px" width="16" height="13" viewBox="0 0 16 13"><path d="M.7 11.4V1.6Q.7 .7 1.6 .7H6.4Q7.2 .7 7.2 1.6V2.8H13.8Q14.7 2.8 14.7 3.7V11.4Q14.7 12.3 13.8 12.3H1.6Q.7 12.3 .7 11.4Z" fill="url(#gFold)" stroke="#3c3c3c" stroke-width="1.1"/><path d="M.9 3H7" stroke="#3c3c3c" stroke-width=".9"/></svg>
<div class="t" style="left:95.0px;top:555.96px;font-size:13.4px;color:#484848;letter-spacing:-0.3px;">CAM Named Views</div>
<div class="a" style="left:58px;top:579px;width:97px;height:24.5px;background:#cdcdcd;"></div>
<svg style="left:63px;top:582.4px" width="16" height="16" viewBox="0 0 16 16"><path d="M1.6 .7H9L13.2 4.6V12H1.6Z" fill="url(#gFold)" stroke="#3c3c3c" stroke-width="1.1" stroke-linejoin="round"/><path d="M9 .9V4.6H13" fill="#fff" stroke="#3c3c3c" stroke-width=".9"/><rect x=".6" y="12" width="14.2" height="3.4" rx=".8" fill="#f6c52c" stroke="#d39a0c" stroke-width=".9"/><path d="M2.6 12.4V14M4.6 12.4V14M6.6 12.4V14M8.6 12.4V14M10.6 12.4V14M12.6 12.4V14" stroke="#fff0b8" stroke-width=".9"/></svg>
<div class="t" style="left:94.0px;top:584.96px;font-size:13.4px;color:#484848;letter-spacing:-0.3px;">Units: in</div>
<div class="a" style="left:59px;top:608px;width:92px;height:24.5px;background:#cdcdcd;"></div>
<svg style="left:40.6px;top:614.2px" width="12" height="12" viewBox="0 0 12 12"><path d="M11.4 .4V11.4H.4Z" fill="url(#gTriD)"/></svg>
<svg style="left:64px;top:613.6px" width="17" height="13" viewBox="0 0 17 13"><path d="M.7 11.6V2.6Q.7 1.8 1.5 1.8H5.4" fill="none" stroke="#3d434b" stroke-width="1.1"/><path d="M1 11.4V2.2H11.4V7H1Z" fill="#e3e8ef"/><path d="M5 3.2L8 .6L11.6 3.4V7.6H5Z" fill="#f7fbff" stroke="#5b7ea6" stroke-width=".8"/><path d="M5.6 3.6L10.8 7.2" stroke="#6aa5e2" stroke-width="1.1"/><path d="M.9 12L4.2 7.2H15.6L11.8 12Z" fill="#c6cfdb" stroke="#3d434b" stroke-width="1.1" stroke-linejoin="round"/></svg>
<div class="t" style="left:95.0px;top:613.96px;font-size:13.4px;color:#484848;letter-spacing:-0.3px;">Setups</div>
<div class="a" style="left:76px;top:637px;width:87px;height:24.5px;background:#cdcdcd;"></div>
<svg style="left:81px;top:642.6px" width="17" height="13" viewBox="0 0 17 13"><path d="M.7 11.6V2.6Q.7 1.8 1.5 1.8H5.4" fill="none" stroke="#3d434b" stroke-width="1.1"/><path d="M1 11.4V2.2H11.4V7H1Z" fill="#e3e8ef"/><path d="M5 3.2L8 .6L11.6 3.4V7.6H5Z" fill="#f7fbff" stroke="#5b7ea6" stroke-width=".8"/><path d="M5.6 3.6L10.8 7.2" stroke="#6aa5e2" stroke-width="1.1"/><path d="M.9 12L4.2 7.2H15.6L11.8 12Z" fill="#c6cfdb" stroke="#3d434b" stroke-width="1.1" stroke-linejoin="round"/></svg>
<div class="t" style="left:112.0px;top:642.96px;font-size:13.4px;color:#484848;letter-spacing:-0.3px;">Setup1</div>
<div class="a" style="left:76px;top:666px;width:92px;height:24.5px;background:#cdcdcd;"></div>
<svg style="left:81px;top:671.6px" width="17" height="13" viewBox="0 0 17 13"><path d="M.7 11.6V2.6Q.7 1.8 1.5 1.8H5.4" fill="none" stroke="#3d434b" stroke-width="1.1"/><path d="M1 11.4V2.2H11.4V7H1Z" fill="#e3e8ef"/><path d="M5 3.2L8 .6L11.6 3.4V7.6H5Z" fill="#f7fbff" stroke="#5b7ea6" stroke-width=".8"/><path d="M5.6 3.6L10.8 7.2" stroke="#6aa5e2" stroke-width="1.1"/><path d="M.9 12L4.2 7.2H15.6L11.8 12Z" fill="#c6cfdb" stroke="#3d434b" stroke-width="1.1" stroke-linejoin="round"/></svg>
<div class="a" style="left:102px;top:666px;width:66px;height:24.5px;background:#b4d5fd;"></div>
<div class="t" style="left:112.8px;top:671.96px;font-size:13.4px;color:#0e357a;font-weight:bold;letter-spacing:-0.3px;">Setup2</div>
<div class="a" style="left:76px;top:695px;width:92px;height:24.5px;background:#cdcdcd;"></div>
<svg style="left:81px;top:700.6px" width="17" height="13" viewBox="0 0 17 13"><path d="M.7 11.6V2.6Q.7 1.8 1.5 1.8H5.4" fill="none" stroke="#3d434b" stroke-width="1.1"/><path d="M1 11.4V2.2H11.4V7H1Z" fill="#e3e8ef"/><path d="M5 3.2L8 .6L11.6 3.4V7.6H5Z" fill="#f7fbff" stroke="#5b7ea6" stroke-width=".8"/><path d="M5.6 3.6L10.8 7.2" stroke="#6aa5e2" stroke-width="1.1"/><path d="M.9 12L4.2 7.2H15.6L11.8 12Z" fill="#c6cfdb" stroke="#3d434b" stroke-width="1.1" stroke-linejoin="round"/></svg>
<div class="a" style="left:102px;top:695px;width:66px;height:24.5px;background:#5b8db9;"></div>
<div class="t" style="left:112.8px;top:700.96px;font-size:13.4px;color:#ffffff;font-weight:bold;letter-spacing:-0.3px;">Setup3</div>
<div class="a" style="left:4px;top:919px;width:300px;height:6px;background:#d0d0d0;box-sizing:border-box;border:1px solid #a6a6a6;"></div>
<svg style="left:0;top:0" width="1536" height="924" viewBox="0 0 1536 924">
<defs>
<linearGradient id="mTop" x1="540" y1="312" x2="920" y2="280" gradientUnits="userSpaceOnUse"><stop offset="0" stop-color="#2a5cb0"/><stop offset="1" stop-color="#2a5eb4"/></linearGradient>
<linearGradient id="mFoot" x1="0" x2="1" y1="0" y2="0"><stop offset="0" stop-color="#45423b"/><stop offset=".4" stop-color="#b4b0a3"/><stop offset=".58" stop-color="#827e72"/><stop offset="1" stop-color="#4a4740"/></linearGradient>
<linearGradient id="mRight" x1="0" y1="285" x2="0" y2="470" gradientUnits="userSpaceOnUse"><stop offset="0" stop-color="#3b6ec6"/><stop offset="1" stop-color="#306cc6"/></linearGradient>
<linearGradient id="mHole" x1="0" y1="0" x2="0" y2="1"><stop offset=".3" stop-color="#2b60b6"/><stop offset="1" stop-color="#4380dc"/></linearGradient>
</defs>
<polygon points="977.3,490 1039.4,451.5 1110.6,493 1110.6,573.3 891,699 849,690 849,560" fill="#9d9c74" />
<polygon points="1039.4,451.5 1110.6,493 1039.4,531" fill="#9f9f76" />
<polygon points="1039.4,531 1110.6,493 1110.6,573.3" fill="#858570" />
<polygon points="977.3,490 1039.4,451.5 1039.4,531 1018,541.6 978,519.4" fill="#9e9d75" />
<polyline points="1039.4,452 1039.4,531 1110.6,573.3" fill="none" stroke="#929170" stroke-width="0.8" />
<polyline points="1039.4,531 1110.6,493" fill="none" stroke="#8f8e70" stroke-width="0.8" />
<polyline points="1039.4,531 1019,541.4" fill="none" stroke="#908f6c" stroke-width="0.8" />
<path d="M710.4 765H747.1999999999999V795H710.4Z" fill="url(#mFoot)"/><path d="M710.4 790Q710.4 796.6 728.8 796.6T747.1999999999999 790" fill="none" stroke="#2c2a25" stroke-width="1"/><path d="M709.8 793H747.8V813H709.8Z" fill="#3f3c36"/><path d="M708.8 798.6Q708.8 792.0 728.8 792.0T748.8 798.6V801.6Q748.8 808.2 728.8 808.2T708.8 801.6Z" fill="url(#mFoot)" stroke="#2c2a25" stroke-width="1"/><path d="M708.8 798.6Q708.8 805.2 728.8 805.2T748.8 798.6" fill="none" stroke="#2c2a25" stroke-width=".9"/><path d="M708.8 808.4Q708.8 801.4 728.8 801.4T748.8 808.4V811.6Q748.8 818.6 728.8 818.6T708.8 811.6Z" fill="url(#mFoot)" stroke="#2c2a25" stroke-width="1"/><path d="M708.8 808.4Q708.8 815.4 728.8 815.4T748.8 808.4" fill="none" stroke="#2c2a25" stroke-width=".9"/><path d="M711.8 810.4Q712.8 815.6 728.8 815.8T745.8 810.4" fill="none" stroke="#d9d6cb" stroke-width="1.1" opacity=".55"/>
<path d="M845.6 687.4H882.4V717.4H845.6Z" fill="url(#mFoot)"/><path d="M845.6 712.4Q845.6 719.0 864 719.0T882.4 712.4" fill="none" stroke="#2c2a25" stroke-width="1"/><path d="M845 715.4H883V735.4H845Z" fill="#3f3c36"/><path d="M844 721.0Q844 714.4 864 714.4T884 721.0V724.0Q884 730.6 864 730.6T844 724.0Z" fill="url(#mFoot)" stroke="#2c2a25" stroke-width="1"/><path d="M844 721.0Q844 727.6 864 727.6T884 721.0" fill="none" stroke="#2c2a25" stroke-width=".9"/><path d="M844 730.8Q844 723.8 864 723.8T884 730.8V734.0Q884 741.0 864 741.0T844 734.0Z" fill="url(#mFoot)" stroke="#2c2a25" stroke-width="1"/><path d="M844 730.8Q844 737.8 864 737.8T884 730.8" fill="none" stroke="#2c2a25" stroke-width=".9"/><path d="M847 732.8Q848 738.0 864 738.1999999999999T881 732.8" fill="none" stroke="#d9d6cb" stroke-width="1.1" opacity=".55"/>
<polygon points="760.5,185 915.7,274.6 943.4,290 943.6,343 977.2,363.5 977.2,381 988,388.4 988,399.3 1003.2,421 1003.2,431.7 1017.3,442.6 1018.4,448 1023.3,452.3 1023.3,464.2 978,490.8 978,519.4 1018,541.4 1023.4,546.6 1023.4,559.6 989.6,580.4 987,589.5 979.2,600 970,607.7 965,618 944.2,628.4 944,666 676.8,818.2 668.8,817.6 513.2,730 513.2,356.6 540.8,312" fill="#2e6bc8" />
<polygon points="760.5,185 915.7,274.6 697,400.6 540.8,312" fill="#265bad" />
<polygon points="540.8,312 697,400.6 668.8,449.8 513.2,356.6" fill="#295fb8" />
<polygon points="697,400.6 915.7,274.6 917.4,282.5 702.7,404.8" fill="#3565c0" />
<polygon points="915.7,274.6 943.4,290 943.4,296.5 917.4,282.5" fill="#4a7cd6" />
<polygon points="513.2,356.6 668.8,449.8 668.8,817.6 513.2,730" fill="#3269bc" />
<polygon points="668.8,449.8 676.8,451.2 676.8,818.2 668.8,817.6" fill="#2a63c0" />
<polygon points="676.8,451.2 702.7,404.8 917.4,282.5 943.4,296.5 943.6,343 943.6,628 944,666 676.8,818.2" fill="url(#mRight)" />
<polygon points="698.4,639 722.7,627 722.7,649 801.7,693.6 815.5,703 835.8,691 849,690 944,636 944,666 698.4,806" fill="#386cbc" />
<polygon points="891,697 944.2,667 944.2,628.4 930,636 852,680" fill="#3f6db4" />
<path d="M524 384Q524 378.6 530 378.4L636 435Q657.6 446 657.6 470V516Q657.6 522 652 525L643 530.5Q639 534 639.4 540Q640 556 648 566Q657 578 657.6 596V752Q657.6 766 646 772Q640 773.6 634 770L546 716Q524 702 524 676V514.4Q524.6 507 528.1 504.6L539.4 500.4Q545.6 497 545 490Q544 482 538 470L531 458.2Q525 449 524 442.7Z" fill="#3469bb" stroke="#0b1d49" stroke-width="1" />
<polygon points="524,384 528.6,385 528.6,676 524,676" fill="#356cb8" />
<polygon points="546.4,712 584.4,691 656,733 656,757 641,768 634,768" fill="#2b5cb1" />
<polygon points="528.6,441.5 568.4,419.6 576,435.7 536.6,461" fill="#3f74d2" />
<polygon points="536.6,461 576,435.7 584.4,458.2 585.8,469.4 581.6,477.9 545,497 545,490 542,478" fill="#4a80de" />
<polygon points="545,497 581.6,477.9 568.4,489.1 528.6,511" fill="#3568c6" />
<path d="M528.6 385V440M528.6 514V676Q529 700 548 713L634 766Q646 770 654 760" fill="none" stroke="#0b1d49" stroke-width="0.8" />
<path d="M568.4 395V660Q570 682 584.4 691L656 733" fill="none" stroke="#0b1d49" stroke-width="0.9" />
<path d="M528.6 385Q529 381 533 382L568.4 400" fill="none" stroke="#0b1d49" stroke-width="0.8" />
<path d="M568.4 419.6Q573 428 576 435.7Q583 450 584.4 458.2Q586.6 466 585.8 469.4Q585 475 581.6 477.9L568.4 489.1" fill="none" stroke="#0b1d49" stroke-width="0.8" />
<path d="M528.6 441.5L568.4 419.6M536.6 461L576 435.7M528.6 511L568.4 489.1M545 497L581.6 477.9" fill="none" stroke="#0b1d49" stroke-width="0.8" />
<path d="M524.4 682.5L568.4 660M545.4 714.6L584.4 691M641 767.6L656.4 758" fill="none" stroke="#0b1d49" stroke-width="0.8" />
<polygon points="524,682 568.4,660 584,690 546,712" fill="#4a7fdc" opacity=".55"/>
<polyline points="540.8,312 760.5,185 915.7,274.6 943.4,290 943.6,343" fill="none" stroke="#07122e" stroke-width="1.4" />
<polyline points="760.5,185 540.8,312 513.2,356.6 513.2,730 668.8,817.6 676.8,818.2 944,666" fill="none" stroke="#07122e" stroke-width="1.4" stroke-linejoin="round"/>
<polyline points="540.8,312 697,400.6 915.7,274.6" fill="none" stroke="#0b1d49" stroke-width="1" />
<polyline points="513.2,356.6 668.8,449.8 697,400.6" fill="none" stroke="#0b1d49" stroke-width="1" />
<polyline points="702.7,404.8 917.4,282.5 943.4,296.5" fill="none" stroke="#0b1d49" stroke-width="0.9" />
<polyline points="915.7,274.6 917.4,282.5" fill="none" stroke="#0b1d49" stroke-width="0.9" />
<polyline points="702.7,404.8 676.8,451.2" fill="none" stroke="#0b1d49" stroke-width="0.9" />
<polyline points="668.8,449.8 668.8,817.6" fill="none" stroke="#0b1d49" stroke-width="1" />
<polyline points="676.8,451.2 676.8,818.2" fill="none" stroke="#0b1d49" stroke-width="1" />
<polyline points="668.8,449.8 676.8,451.2" fill="none" stroke="#0b1d49" stroke-width="0.8" />
<polygon points="722.7,422.2 801.7,466.6 801.7,693.6 722.7,649" fill="#2365cb" />
<polygon points="734.6,398.4 816.9,442.8 801.7,466.6 722.7,422.2" fill="#2f6fd8" />
<polygon points="734.6,398.4 884.5,312.4 943.4,345 958,354.5 816.9,442.8" fill="#2a69d2" />
<polygon points="801.7,466.6 816.9,442.8 958,354.5 977.3,365.5 977.3,382.8 988.2,389.7 988.2,399.3 1003,420 1003,431.3 1017.7,443.4 1017.7,448.6 1023.4,452 1023.4,464.2 978,490.8 978,519.4 1018,541.4 1023.4,546.6 1023.4,559.6 989.6,580.4 987,589.5 979.2,600 970,607.7 965,618 944.2,628.4 944.2,640 849,690 835.8,691 815.5,703 801.7,693.6" fill="#286ad4" />
<polygon points="802.6999999999999,462.403 977.3,365.5 977.3,382.8 802.6999999999999,479.70300000000003" fill="#2a6cd8" />
<polygon points="802.6999999999999,479.70300000000003 977.3,382.8 988.2,389.7 813.6,486.603" fill="#2666d0" />
<polygon points="813.6,486.603 988.2,389.7 988.2,399.3 813.6,496.20300000000003" fill="#2b6ed9" />
<polygon points="813.6,496.20300000000003 988.2,399.3 1003,420 828.4,516.903" fill="#2869d4" />
<polygon points="828.4,516.903 1003,420 1003,431.3 828.4,528.203" fill="#2d70dc" />
<polygon points="828.4,528.203 1003,431.3 1017.7,443.4 843.1,540.303" fill="#2664ce" />
<polygon points="843.1,540.303 1017.7,443.4 1017.7,448.6 843.1,545.503" fill="#2c6fda" />
<polygon points="843.1,545.503 1017.7,448.6 1023.4,452 848.8,548.903" fill="#2867d2" />
<polygon points="848.8,548.903 1023.4,452 1023.4,464.2 848.8,561.103" fill="#2560c8" />
<polygon points="848.8,561.103 1023.4,464.2 978,490.8 978,519.4 849,592 849,562" fill="#2c6bca" />
<polygon points="849,592 978,519.4 1018,541.4 1023.4,546.6 844,646" fill="#2a69cc" />
<polygon points="844,646 1023.4,546.6 1023.4,559.6 846.8,656" fill="#2660c4" />
<polygon points="846.8,656 989.6,580.4 987,589.5 979.2,600 970,607.7 965,618 944.2,628.4 860,672" fill="#2f69c4" />
<polygon points="846.8,657 860,672 944.2,628.4 944.2,640 849,690 846.8,690" fill="#3468c0" />
<polyline points="838,443 977.3,365.5" fill="none" stroke="#0a1c5a" stroke-width="1.05" />
<polyline points="802.6999999999999,479.70300000000003 977.3,382.8" fill="none" stroke="#0a1c5a" stroke-width="1.05" />
<polyline points="813.6,486.603 988.2,389.7" fill="none" stroke="#0a1c5a" stroke-width="1.05" />
<polyline points="813.6,496.20300000000003 988.2,399.3" fill="none" stroke="#0a1c5a" stroke-width="1.05" />
<polyline points="828.4,516.903 1003,420" fill="none" stroke="#0a1c5a" stroke-width="1.05" />
<polyline points="828.4,528.203 1003,431.3" fill="none" stroke="#0a1c5a" stroke-width="1.05" />
<polyline points="843.1,540.303 1017.7,443.4" fill="none" stroke="#0a1c5a" stroke-width="1.05" />
<polyline points="843.1,545.503 1017.7,448.6" fill="none" stroke="#0a1c5a" stroke-width="1.05" />
<polyline points="848.8,548.903 1023.4,452" fill="none" stroke="#0a1c5a" stroke-width="1.05" />
<polyline points="848.8,561.103 1023.4,464.2" fill="none" stroke="#0a1c5a" stroke-width="1.05" />
<polyline points="845.1,536.903 1013.7,442.2" fill="none" stroke="#0b1d49" stroke-width="0.7" />
<polyline points="819.6,478.603 970,382" fill="none" stroke="#0b1d49" stroke-width="0.7" />
<polyline points="852.8,545.703 1020.1999999999999,451.0" fill="none" stroke="#0c2066" stroke-width="0.7" />
<polyline points="847.1,541.903 1014.1,447.20000000000005" fill="none" stroke="#0c2066" stroke-width="0.7" />
<polyline points="832.4,513.5029999999999 998,418.8" fill="none" stroke="#0c2066" stroke-width="0.7" />
<polyline points="852.8,555.3029999999999 1021.4,460.59999999999997" fill="none" stroke="#0c2066" stroke-width="0.7" />
<path d="M816.9 442.8L801.7 466.6V693.6L815.5 703L835.8 691" fill="none" stroke="#0b1d49" stroke-width="1" />
<path d="M818 463.3Q806 474 804 486L813.6 488V499Q814 510 825.5 518.5Q829 526 830 536L843 546L848.8 549V561" fill="none" stroke="#0b1d49" stroke-width="0.9" />
<polyline points="943.4,345 977.3,365.5 977.3,382.8 988.2,389.7 988.2,399.3 1003,420 1003,431.3 1017.7,443.4 1017.7,448.6 1023.4,452 1023.4,464.2 978,490.8" fill="none" stroke="#081641" stroke-width="1.5" />
<polyline points="978,490.8 978,519.4 1018,541.4 1023.4,546.6 1023.4,559.6 989.6,580.4" fill="none" stroke="#0b1d49" stroke-width="0.9" />
<path d="M989.6 580.4Q988 590 979.2 600Q972 606 970 607.7Q966 612 965 618L944.2 628.4" fill="none" stroke="#1c3d86" stroke-width="0.8" />
<polyline points="849,592 978,519.4" fill="none" stroke="#1a3a84" stroke-width="0.8" />
<polyline points="844,642.7 1023.4,546.6" fill="none" stroke="#0b1d49" stroke-width="0.9" />
<polyline points="846.8,652.5 1023.4,559.6" fill="none" stroke="#0b1d49" stroke-width="0.9" />
<polyline points="841,637 1018,541.6" fill="none" stroke="#16357c" stroke-width="0.7" />
<path d="M844 642.7L841 637M844 642.7L846.8 652.5V668" fill="none" stroke="#0b1d49" stroke-width="0.8" />
<polyline points="722.7,649 722.7,422.2 734.6,398.4 884.5,312.4" fill="none" stroke="#0b1d49" stroke-width="1" />
<polyline points="722.7,422.2 801.7,466.6" fill="none" stroke="#0b1d49" stroke-width="0.9" />
<polyline points="734.6,398.4 816.9,442.8" fill="none" stroke="#0b1d49" stroke-width="0.9" />
<polyline points="816.9,442.8 836.5,432" fill="none" stroke="#0b1d49" stroke-width="0.9" />
<polyline points="722.7,649 801.7,693.6" fill="none" stroke="#0b1d49" stroke-width="1" />
<path d="M801.7 650L815 642M812 676Q811 668 818 667L835.8 678V691M812 676L818 682L835.8 672" fill="none" stroke="#0b1d49" stroke-width="0.8" />
<path d="M801.7 598L822 587M809 603L822 596" fill="none" stroke="#15347a" stroke-width="0.7" />
<ellipse cx="817" cy="536" rx="3.6" ry="5" fill="#4f86ea" stroke="#0b1d49" stroke-width=".8"/>
<ellipse cx="817" cy="643" rx="3.6" ry="5" fill="#4f86ea" stroke="#0b1d49" stroke-width=".8"/>
<ellipse cx="859.5" cy="526.5" rx="3" ry="2" fill="none" stroke="#0b1d49" stroke-width=".7"/>
<ellipse cx="986.4" cy="453.6" rx="3.6" ry="2.4" fill="none" stroke="#0b1d49" stroke-width=".7"/>
<ellipse cx="967" cy="538" rx="2.4" ry="1.6" fill="none" stroke="#16357c" stroke-width=".6"/>
<polygon points="877.7,348.2 884.2,345.6 890.7,346.9 890.7,365.8 877.7,372.3" fill="#2560cc" />
<polygon points="890.7,346.9 902.4,354.1 902.4,371.7 890.7,365.8" fill="#2b69d6" />
<polygon points="902.4,354.1 911.5,349.5 911.5,367.8 902.4,371.7" fill="#2560cc" />
<polygon points="921.3,364.5 929.7,369 929.7,387.3 921.3,382.1" fill="#2b69d6" />
<polygon points="929.7,369 943.4,369 943.4,387.3 929.7,387.3" fill="#2560cc" />
<path d="M795.6 397.7L877.7 348.2Q881 345.4 884.2 345.6Q888 345.4 890.7 346.9L902.4 354.1L911.5 349.5L928.4 359.3L921.3 364.5L929.7 369H943.4L962.3 359.3" fill="none" stroke="#0a1c5a" stroke-width="1" />
<path d="M877.7 348.2V372.3M890.7 346.9V365.8M902.4 354.1V371.7M911.5 349.5V367.8M921.3 364.5V382.1M929.7 369V387.3M943.4 369V387.3" fill="none" stroke="#0a1c5a" stroke-width="1" />
<path d="M795.6 397.7L798.2 402.9L877.7 357" fill="none" stroke="#0a1c5a" stroke-width="0.8" />
<path d="M877.7 372.3L810 410.1M877.7 372.3L890.7 365.8L902.4 371.7L911.5 367.8L921.3 373" fill="none" stroke="#0a1c5a" stroke-width="0.9" />
<path d="M921.3 382.1L929.7 387.3L937.6 391.2L943.4 387.3L964.9 376.2L975.3 382.1" fill="none" stroke="#0a1c5a" stroke-width="0.9" />
<path d="M798.2 402.9L809.3 408.1L801.5 412.7L809.3 416.6V408.1M809.3 416.6L817.8 423.1L825.6 419.2L836 425V450" fill="none" stroke="#0a1c5a" stroke-width="0.9" />
<path d="M836 432L823 439.6" fill="none" stroke="#0a1c5a" stroke-width="0.7" />
<ellipse cx="864.4" cy="402.3" rx="21.2" ry="13.4" fill="#2a68d2" stroke="#0a1c5a" stroke-width=".9"/>
<ellipse cx="864.6" cy="399.4" rx="17.6" ry="11.8" fill="#2c6ad6" stroke="#0a1c5a" stroke-width=".9"/>
<path d="M851 386L858.1 380.1L871.1 379.5L877.9 384.7L876.4 389.9V397.7L867 402.9L854.2 401L851 394.6Z" fill="#2d6cd8" stroke="#0a1c5a" stroke-width="0.9" />
<path d="M851 386L854.2 392.5L867 394.5L876.4 389.9M854.2 392.5V401M867 394.5V402.9" fill="none" stroke="#0a1c5a" stroke-width="0.9" />
<ellipse cx="666" cy="255.2" rx="18.6" ry="11" fill="#566178" stroke="#10192c" stroke-width="1"/><ellipse cx="666" cy="253.0" rx="17.6" ry="9.6" fill="#424c60" stroke="#10192c" stroke-width="1"/><path d="M657.4 250.2L662.6 247.6H671L675.2 250.6L672.4 257.2H660.4Z" fill="#8893a6" stroke="#1a2438" stroke-width=".8"/><path d="M665.4 247.6V257.2" stroke="#1a2438" stroke-width=".8"/><ellipse cx="667" cy="261.2" rx="7" ry="1.6" fill="#c9d2e2" opacity=".85"/>
<ellipse cx="791.2" cy="328.20000000000005" rx="19" ry="11" fill="#566178" stroke="#10192c" stroke-width="1"/><ellipse cx="791.2" cy="326.0" rx="18" ry="9.6" fill="#424c60" stroke="#10192c" stroke-width="1"/><path d="M782.6 323.20000000000005L787.8000000000001 320.6H796.2L800.4000000000001 323.6L797.6 330.20000000000005H785.6Z" fill="#8893a6" stroke="#1a2438" stroke-width=".8"/><path d="M790.6 320.6V330.20000000000005" stroke="#1a2438" stroke-width=".8"/><ellipse cx="792.2" cy="334.20000000000005" rx="7" ry="1.6" fill="#c9d2e2" opacity=".85"/>
<ellipse cx="728.6" cy="293.2" rx="12" ry="6.8" fill="#2c62b8" stroke="#0b1d49" stroke-width=".9"/><ellipse cx="728.8" cy="294" rx="9.8" ry="5.3" fill="#3b76d2" stroke="#10286a" stroke-width=".7"/>

<polygon points="650,268 690,262 690,300 655,300" fill="#2f66c4" opacity=".3"/>
<polygon points="715,300 745,300 745,345 715,345" fill="#2f66c4" opacity=".3"/>
<polygon points="770,340 812,336 812,380 775,386" fill="#2f66c4" opacity=".3"/>
<g transform="rotate(38 646.4 389.6)" opacity="0.5"><ellipse cx="646.4" cy="389.6" rx="6.4" ry="9.6" fill="#cfe0ff" fill-opacity=".35" stroke="#e8f0ff" stroke-width="1.6"/><path d="M640.0 389.6H652.8" stroke="#e8f0ff" stroke-width="1.3"/></g>
<g transform="rotate(28 931 554.4)" opacity="0.35"><ellipse cx="931" cy="554.4" rx="7.4" ry="11.6" fill="#cfe0ff" fill-opacity=".35" stroke="#e8f0ff" stroke-width="1.6"/><path d="M923.6 554.4H938.4" stroke="#e8f0ff" stroke-width="1.3"/></g>
<g opacity=".75"><circle cx="1002.8" cy="592" r="10.6" fill="#bdbba2" stroke="#d6d5c4" stroke-width="1.8"/><path d="M993.6 588.6H1012Q1010 583 1002.8 582.6Q995.6 583 993.6 588.6Z" fill="#e4e3d6"/><path d="M992.8 589H1012.8" stroke="#e4e3d6" stroke-width="1.4"/></g>
<ellipse cx="728.6" cy="694" rx="13.8" ry="8.6" fill="#5b88d6" fill-opacity=".55"/>
<circle cx="728.6" cy="694" r="4.4" fill="#8fbaff"/>
<path d="M725.9 682V632.6H723.7L728.6 615.8L733.5 632.6H731.3V682Z" fill="#1646f4"/>
<path d="M739.4 685.2L782.4 661.8L780.8 658.6L795.4 655.8L786.2 668.6L784.8 666L741.6 689.6Z" fill="#18b488" opacity=".88"/>
<path d="M741.4 698L783.6 720.6L785.2 717.6L795.4 732.2L779.8 727.8L781.4 725L739.2 702.6Z" fill="#853d98" opacity=".88"/>
<text x="726.4" y="607" font-family="Liberation Sans, sans-serif" font-size="10" fill="#3b78ee">Z</text>
<text x="805.6" y="743.6" font-family="Liberation Sans, sans-serif" font-size="8" fill="#d0525a">x</text>
</svg>
<svg style="left:0;top:0" width="0" height="0"><defs><linearGradient id="gChk" x1="0" y1="0" x2="1" y2="1"><stop offset="0" stop-color="#b2b2b2"/><stop offset="1" stop-color="#f8f8f8"/></linearGradient></defs></svg>
<div class="a" style="left:1197px;top:169px;width:312px;height:621px;background:#dfdfdf;box-sizing:border-box;border:1px solid #ababab;border-radius:2px;"></div>
<div class="a" style="left:1198px;top:170px;width:310px;height:23px;background:#d3d3d3;"></div>
<div class="a" style="left:1198px;top:193px;width:310px;height:1px;background:#ababab;"></div>
<svg style="left:1203px;top:176.6px" width="10" height="10" viewBox="0 0 10 10"><circle cx="5" cy="5" r="4.6" fill="#1c1c1c"/><rect x="2.2" y="4.2" width="5.6" height="1.6" fill="#e6e6e6"/></svg>
<div class="t" style="left:1224px;top:173.66px;font-size:13.4px;color:#646464;letter-spacing:-0.36px;">SETUP : SETUP3</div>
<div class="a" style="left:1198px;top:221px;width:310px;height:1px;background:#bcbcbc;"></div>
<div class="a" style="left:1198px;top:196px;width:74px;height:26px;background:#e3e3e3;box-sizing:border-box;border:1px solid #c3c3c3;border-bottom:none;border-left:none;"></div>
<div class="a" style="left:1344px;top:197px;width:1px;height:24px;background:#c6c6c6;"></div>
<div class="a" style="left:1462px;top:197px;width:1px;height:24px;background:#c6c6c6;"></div>
<svg style="left:1205px;top:201px" width="16" height="16" viewBox="0 0 16 16"><path d="M5.2 4.6L8.6 .8H15V8L11.6 11.6H5.2Z" fill="#8fc0ea" stroke="#1b3350" stroke-width="1.1" stroke-linejoin="round"/><path d="M.8 8.2L3.8 5H11V11.6L7.8 15.2H.8Z" fill="#f4f7fb" stroke="#1e1e1e" stroke-width="1.1" stroke-linejoin="round"/><path d="M7.8 15.2V8.4H.9M7.8 8.4L11 5" stroke="#1e1e1e" stroke-width=".8" fill="none"/></svg>
<div class="t" style="left:1226.6px;top:201.56px;font-size:13.4px;color:#454545;letter-spacing:-0.2px;">Setup</div>
<svg style="left:1277.6px;top:200.8px" width="17" height="17" viewBox="0 0 17 17"><path d="M.8 5.2L4.6 .8H15.8V11L11.8 15.6H.8Z" fill="#ecd023" stroke="#b89410" stroke-width="1" stroke-linejoin="round"/><path d="M.8 5.2L4.6 .8H15.8L11.8 5.2Z" fill="#f9ec8a"/><path d="M11.8 5.2L15.8 .8V11L11.8 15.6Z" fill="#d9b022"/></svg>
<div class="t" style="left:1299.8px;top:201.56px;font-size:13.4px;color:#454545;letter-spacing:0.1px;">Stock</div>
<svg style="left:1351.6px;top:200.6px" width="14" height="17" viewBox="0 0 14 17"><rect x=".7" y=".7" width="12.4" height="15.4" rx=".8" fill="#eaf1fb" stroke="#1e1e1e" stroke-width="1.2"/><text x="6.9" y="8" text-anchor="middle" font-family="Liberation Sans, sans-serif" font-weight="bold" font-size="6.9" fill="#3f8be6">G1</text><text x="6.9" y="14.2" text-anchor="middle" font-family="Liberation Sans, sans-serif" font-weight="bold" font-size="6.9" fill="#3f8be6">G2</text></svg>
<div class="t" style="left:1372.8px;top:201.56px;font-size:13.4px;color:#454545;letter-spacing:-0.16px;">Post Process</div>
<svg style="left:1207.2px;top:235.0px" width="9.6" height="6.4" viewBox="0 0 9.6 6.4"><path d="M0 0H9.6L4.8 6.4Z" fill="#222"/></svg>
<div class="t" style="left:1223.2px;top:231.76px;font-size:13.4px;color:#3c3c3c;font-weight:bold;letter-spacing:-0.28px;">Setup</div>
<div class="t" style="left:1207.6px;top:263.66px;font-size:13.4px;color:#484848;letter-spacing:-0.32px;">Operation Type</div>
<div class="a" style="left:1336px;top:257px;width:157px;height:28px;background:#c9c9c9;"></div>
<div class="t" style="left:1340.8px;top:263.66px;font-size:13.4px;color:#484848;letter-spacing:-0.3px;">Milling</div>
<svg style="left:1483px;top:268px" width="6.8" height="4.6" viewBox="0 0 6.8 4.6"><path d="M0 0H6.8L3.4 4.6Z" fill="#222"/></svg>
<div class="a" style="left:1199px;top:293px;width:295px;height:1px;background:#c4c4c4;"></div>
<svg style="left:1207.2px;top:309.0px" width="9.6" height="6.4" viewBox="0 0 9.6 6.4"><path d="M0 0H9.6L4.8 6.4Z" fill="#222"/></svg>
<div class="t" style="left:1221.4px;top:305.76px;font-size:13.4px;color:#3c3c3c;font-weight:bold;letter-spacing:-0.1px;">Work Coordinate System (WCS)</div>
<div class="t" style="left:1207.6px;top:337.66px;font-size:13.4px;color:#484848;letter-spacing:-0.34px;">Orientation</div>
<div class="a" style="left:1336px;top:331px;width:157px;height:28px;background:#c9c9c9;"></div>
<div class="t" style="left:1340.8px;top:337.70px;font-size:13.4px;color:#484848;letter-spacing:-0.3px;width:128.6px;overflow:hidden;">Select Z axis/plane &amp; X</div>
<div class="t" style="left:1470.6px;top:337.66px;font-size:13.4px;color:#484848;letter-spacing:-0.2px;">...</div>
<svg style="left:1483px;top:342px" width="6.8" height="4.6" viewBox="0 0 6.8 4.6"><path d="M0 0H6.8L3.4 4.6Z" fill="#222"/></svg>
<div class="t" style="left:1207.6px;top:369.66px;font-size:13.4px;color:#484848;letter-spacing:-0.34px;">Z Axis</div>
<div class="a" style="left:1336px;top:363px;width:55.4px;height:28px;background:#c9c9c9;"></div>
<svg style="left:1340.6px;top:368.8px" width="11" height="17" viewBox="0 0 11 17"><path d="M.8 .8V12.6L3.6 10L5.8 15.4L7.8 14.6L5.6 9.4H9.4Z" fill="#fff" stroke="#2b2b2b" stroke-width="1" stroke-linejoin="round"/></svg>
<div class="t" style="left:1354.6px;top:369.66px;font-size:13.4px;color:#484848;letter-spacing:-0.3px;">Face</div>
<svg style="left:1402.4px;top:371.6px" width="11" height="11" viewBox="0 0 11 11"><path d="M.9 .9L10.1 10.1M10.1 .9L.9 10.1" stroke="#505050" stroke-width="2.3" fill="none"/></svg>
<div class="t" style="left:1207.6px;top:401.66px;font-size:13.4px;color:#484848;letter-spacing:-0.34px;">Flip Z Axis</div>
<svg style="left:1336.6px;top:400px" width="17" height="17" viewBox="0 0 17 17"><rect x=".8" y=".8" width="15" height="15" rx="2.4" fill="url(#gChk)" stroke="#3a3a3a" stroke-width="1.3"/><path d="M3.2 9.4L6.6 12.6L12.8 3.2" fill="none" stroke="#0c0c0c" stroke-width="1.8"/></svg>
<div class="t" style="left:1207.6px;top:433.66px;font-size:13.4px;color:#484848;letter-spacing:-0.34px;">X Axis</div>
<div class="a" style="left:1336px;top:427px;width:55.6px;height:28px;background:#c9c9c9;"></div>
<svg style="left:1340.6px;top:432.8px" width="11" height="17" viewBox="0 0 11 17"><path d="M.8 .8V12.6L3.6 10L5.8 15.4L7.8 14.6L5.6 9.4H9.4Z" fill="#fff" stroke="#2b2b2b" stroke-width="1" stroke-linejoin="round"/></svg>
<div class="t" style="left:1354.6px;top:433.66px;font-size:13.4px;color:#484848;letter-spacing:-0.3px;">Edge</div>
<svg style="left:1402.6px;top:435.6px" width="11" height="11" viewBox="0 0 11 11"><path d="M.9 .9L10.1 10.1M10.1 .9L.9 10.1" stroke="#505050" stroke-width="2.3" fill="none"/></svg>
<div class="t" style="left:1207.6px;top:465.66px;font-size:13.4px;color:#484848;letter-spacing:-0.34px;">Flip X Axis</div>
<svg style="left:1336.6px;top:464px" width="17" height="17" viewBox="0 0 17 17"><rect x=".8" y=".8" width="15" height="15" rx="2.4" fill="url(#gChk)" stroke="#3a3a3a" stroke-width="1.3"/><path d="M3.2 9.4L6.6 12.6L12.8 3.2" fill="none" stroke="#0c0c0c" stroke-width="1.8"/></svg>
<div class="t" style="left:1207.6px;top:497.66px;font-size:13.4px;color:#484848;letter-spacing:-0.34px;">Origin</div>
<div class="a" style="left:1336px;top:491px;width:157px;height:28px;background:#c9c9c9;"></div>
<div class="t" style="left:1340.8px;top:497.66px;font-size:13.4px;color:#484848;letter-spacing:-0.3px;">Selected point</div>
<svg style="left:1483px;top:502px" width="6.8" height="4.6" viewBox="0 0 6.8 4.6"><path d="M0 0H6.8L3.4 4.6Z" fill="#222"/></svg>
<div class="t" style="left:1207.6px;top:529.66px;font-size:13.4px;color:#484848;letter-spacing:-0.34px;">WCS Origin</div>
<div class="a" style="left:1336px;top:523px;width:91.4px;height:28px;background:#c9c9c9;"></div>
<svg style="left:1340.6px;top:528.8px" width="11" height="17" viewBox="0 0 11 17"><path d="M.8 .8V12.6L3.6 10L5.8 15.4L7.8 14.6L5.6 9.4H9.4Z" fill="#fff" stroke="#2b2b2b" stroke-width="1" stroke-linejoin="round"/></svg>
<div class="t" style="left:1354.6px;top:529.66px;font-size:13.4px;color:#484848;letter-spacing:-0.14px;">Joint Origin</div>
<svg style="left:1438.4px;top:531.6px" width="11" height="11" viewBox="0 0 11 11"><path d="M.9 .9L10.1 10.1M10.1 .9L.9 10.1" stroke="#505050" stroke-width="2.3" fill="none"/></svg>
<div class="a" style="left:1199px;top:559px;width:295px;height:1px;background:#c4c4c4;"></div>
<svg style="left:1207.2px;top:575.0px" width="9.6" height="6.4" viewBox="0 0 9.6 6.4"><path d="M0 0H9.6L4.8 6.4Z" fill="#222"/></svg>
<div class="t" style="left:1222px;top:571.76px;font-size:13.4px;color:#3c3c3c;font-weight:bold;letter-spacing:-0.28px;">Model</div>
<div class="t" style="left:1207.6px;top:603.66px;font-size:13.4px;color:#484848;letter-spacing:-0.34px;">Model</div>
<div class="a" style="left:1336px;top:597px;width:73.6px;height:28px;background:#c9c9c9;"></div>
<svg style="left:1340.6px;top:602.8px" width="11" height="17" viewBox="0 0 11 17"><path d="M.8 .8V12.6L3.6 10L5.8 15.4L7.8 14.6L5.6 9.4H9.4Z" fill="#fff" stroke="#2b2b2b" stroke-width="1" stroke-linejoin="round"/></svg>
<div class="t" style="left:1354.6px;top:603.66px;font-size:13.4px;color:#484848;letter-spacing:-0.3px;">Nothing</div>
<div class="a" style="left:1199px;top:632px;width:295px;height:1px;background:#c4c4c4;"></div>
<svg style="left:1207.4px;top:649.4px" width="9.2" height="6.2" viewBox="0 0 9.2 6.2"><path d="M0 0H9.2L4.6 6.2Z" fill="#222"/></svg>
<svg style="left:1221.8px;top:644.4px" width="17" height="17" viewBox="0 0 17 17"><rect x=".8" y=".8" width="15" height="15" rx="2.4" fill="url(#gChk)" stroke="#3a3a3a" stroke-width="1.3"/><path d="M3.2 9.4L6.6 12.6L12.8 3.2" fill="none" stroke="#0c0c0c" stroke-width="1.8"/></svg>
<div class="t" style="left:1246.2px;top:645.76px;font-size:13.4px;color:#3c3c3c;font-weight:bold;letter-spacing:-0.2px;">Fixture</div>
<div class="t" style="left:1207.6px;top:677.66px;font-size:13.4px;color:#484848;letter-spacing:-0.34px;">Fixture</div>
<div class="a" style="left:1336px;top:671px;width:79.6px;height:28px;background:#4d88bf;"></div>
<svg style="left:1340.6px;top:676.8px" width="11" height="17" viewBox="0 0 11 17"><path d="M.8 .8V12.6L3.6 10L5.8 15.4L7.8 14.6L5.6 9.4H9.4Z" fill="#fff" stroke="#2b2b2b" stroke-width="1" stroke-linejoin="round"/></svg>
<div class="t" style="left:1354.6px;top:677.66px;font-size:13.4px;color:#fff;letter-spacing:-0.3px;">5 Bodies</div>
<svg style="left:1426.6px;top:679.6px" width="11" height="11" viewBox="0 0 11 11"><path d="M.9 .9L10.1 10.1M10.1 .9L.9 10.1" stroke="#505050" stroke-width="2.3" fill="none"/></svg>
<div class="t" style="left:1207.6px;top:709.66px;font-size:13.4px;color:#484848;letter-spacing:-0.12px;">Fixture Attachment</div>
<div class="a" style="left:1336px;top:703px;width:25.6px;height:28px;background:#c9c9c9;"></div>
<svg style="left:1340.6px;top:708.8px" width="11" height="17" viewBox="0 0 11 17"><path d="M.8 .8V12.6L3.6 10L5.8 15.4L7.8 14.6L5.6 9.4H9.4Z" fill="#fff" stroke="#2b2b2b" stroke-width="1" stroke-linejoin="round"/></svg>
<div class="a" style="left:1198px;top:744px;width:310px;height:45px;background:#d3d3d3;box-sizing:border-box;border-top:1px solid #b8b8b8;"></div>
<div class="a" style="left:1359px;top:756px;width:60px;height:23px;background:#ececec;box-sizing:border-box;border:1px solid #b9b9b9;"></div>
<div class="a" style="left:1431px;top:756px;width:60px;height:23px;background:#ececec;box-sizing:border-box;border:1px solid #b9b9b9;"></div>
<div class="t" style="left:1377.4px;top:759.80px;font-size:15px;color:#5a5a5a;">OK</div>
<div class="t" style="left:1437.4px;top:759.80px;font-size:15px;color:#5a5a5a;">Cancel</div>
<div class="a" style="left:1044px;top:740px;width:47px;height:20px;background:#f0f0f1;box-sizing:border-box;border-top:1px solid #a9a9a9;border-right:1px solid #e2e2e2;border-left:1px solid #e6e6e6;"></div>
<div class="t" style="left:1048px;top:741.83px;font-size:12.6px;color:#0a0a0a;">Fixture</div>
<div class="a" style="left:841px;top:914px;width:155px;height:10px;background:#cbcbcb;"></div>
<div class="a" style="left:1003px;top:914px;width:76px;height:10px;background:#cbcbcb;"></div>
<svg style="left:0;top:900px" width="1536" height="24" viewBox="0 900 1536 24">
<path d="M848.6 925L854 920.4L859.4 925" fill="#fff" stroke="#222" stroke-width="1.1"/>
<path d="M886 925L890 921.6L893.4 923.4M893.6 922H897" fill="none" stroke="#333" stroke-width="1.1"/>
<path d="M912.6 925V922.2Q914 920.6 915.4 922.2M916.4 924V921.4Q917.6 920.4 918.8 921.6V924M920 923.4Q921.4 922 922.4 923.4" fill="none" stroke="#333" stroke-width="1"/>
<path d="M938.6 923.4H943.6M949.6 921.4V925M947.6 923.4H951.6" fill="none" stroke="#222" stroke-width="1.4"/>
<path d="M962 925Q964 920.8 969.6 921Q974.4 921.2 976 925" fill="#dfeaf6" stroke="#445" stroke-width="1.1"/><path d="M977.4 921.4V923" stroke="#333" stroke-width="1"/>
<rect x="1008.4" y="921" width="15" height="5" fill="#e8eef6" stroke="#1a2c52" stroke-width="1.4"/>
<path d="M1046.6 925V921.4H1061V925M1050.2 921.4V925M1053.8 921.4V925M1057.4 921.4V925" fill="#f4f4f4" stroke="#222" stroke-width="1"/>
</svg>
</body></html>
